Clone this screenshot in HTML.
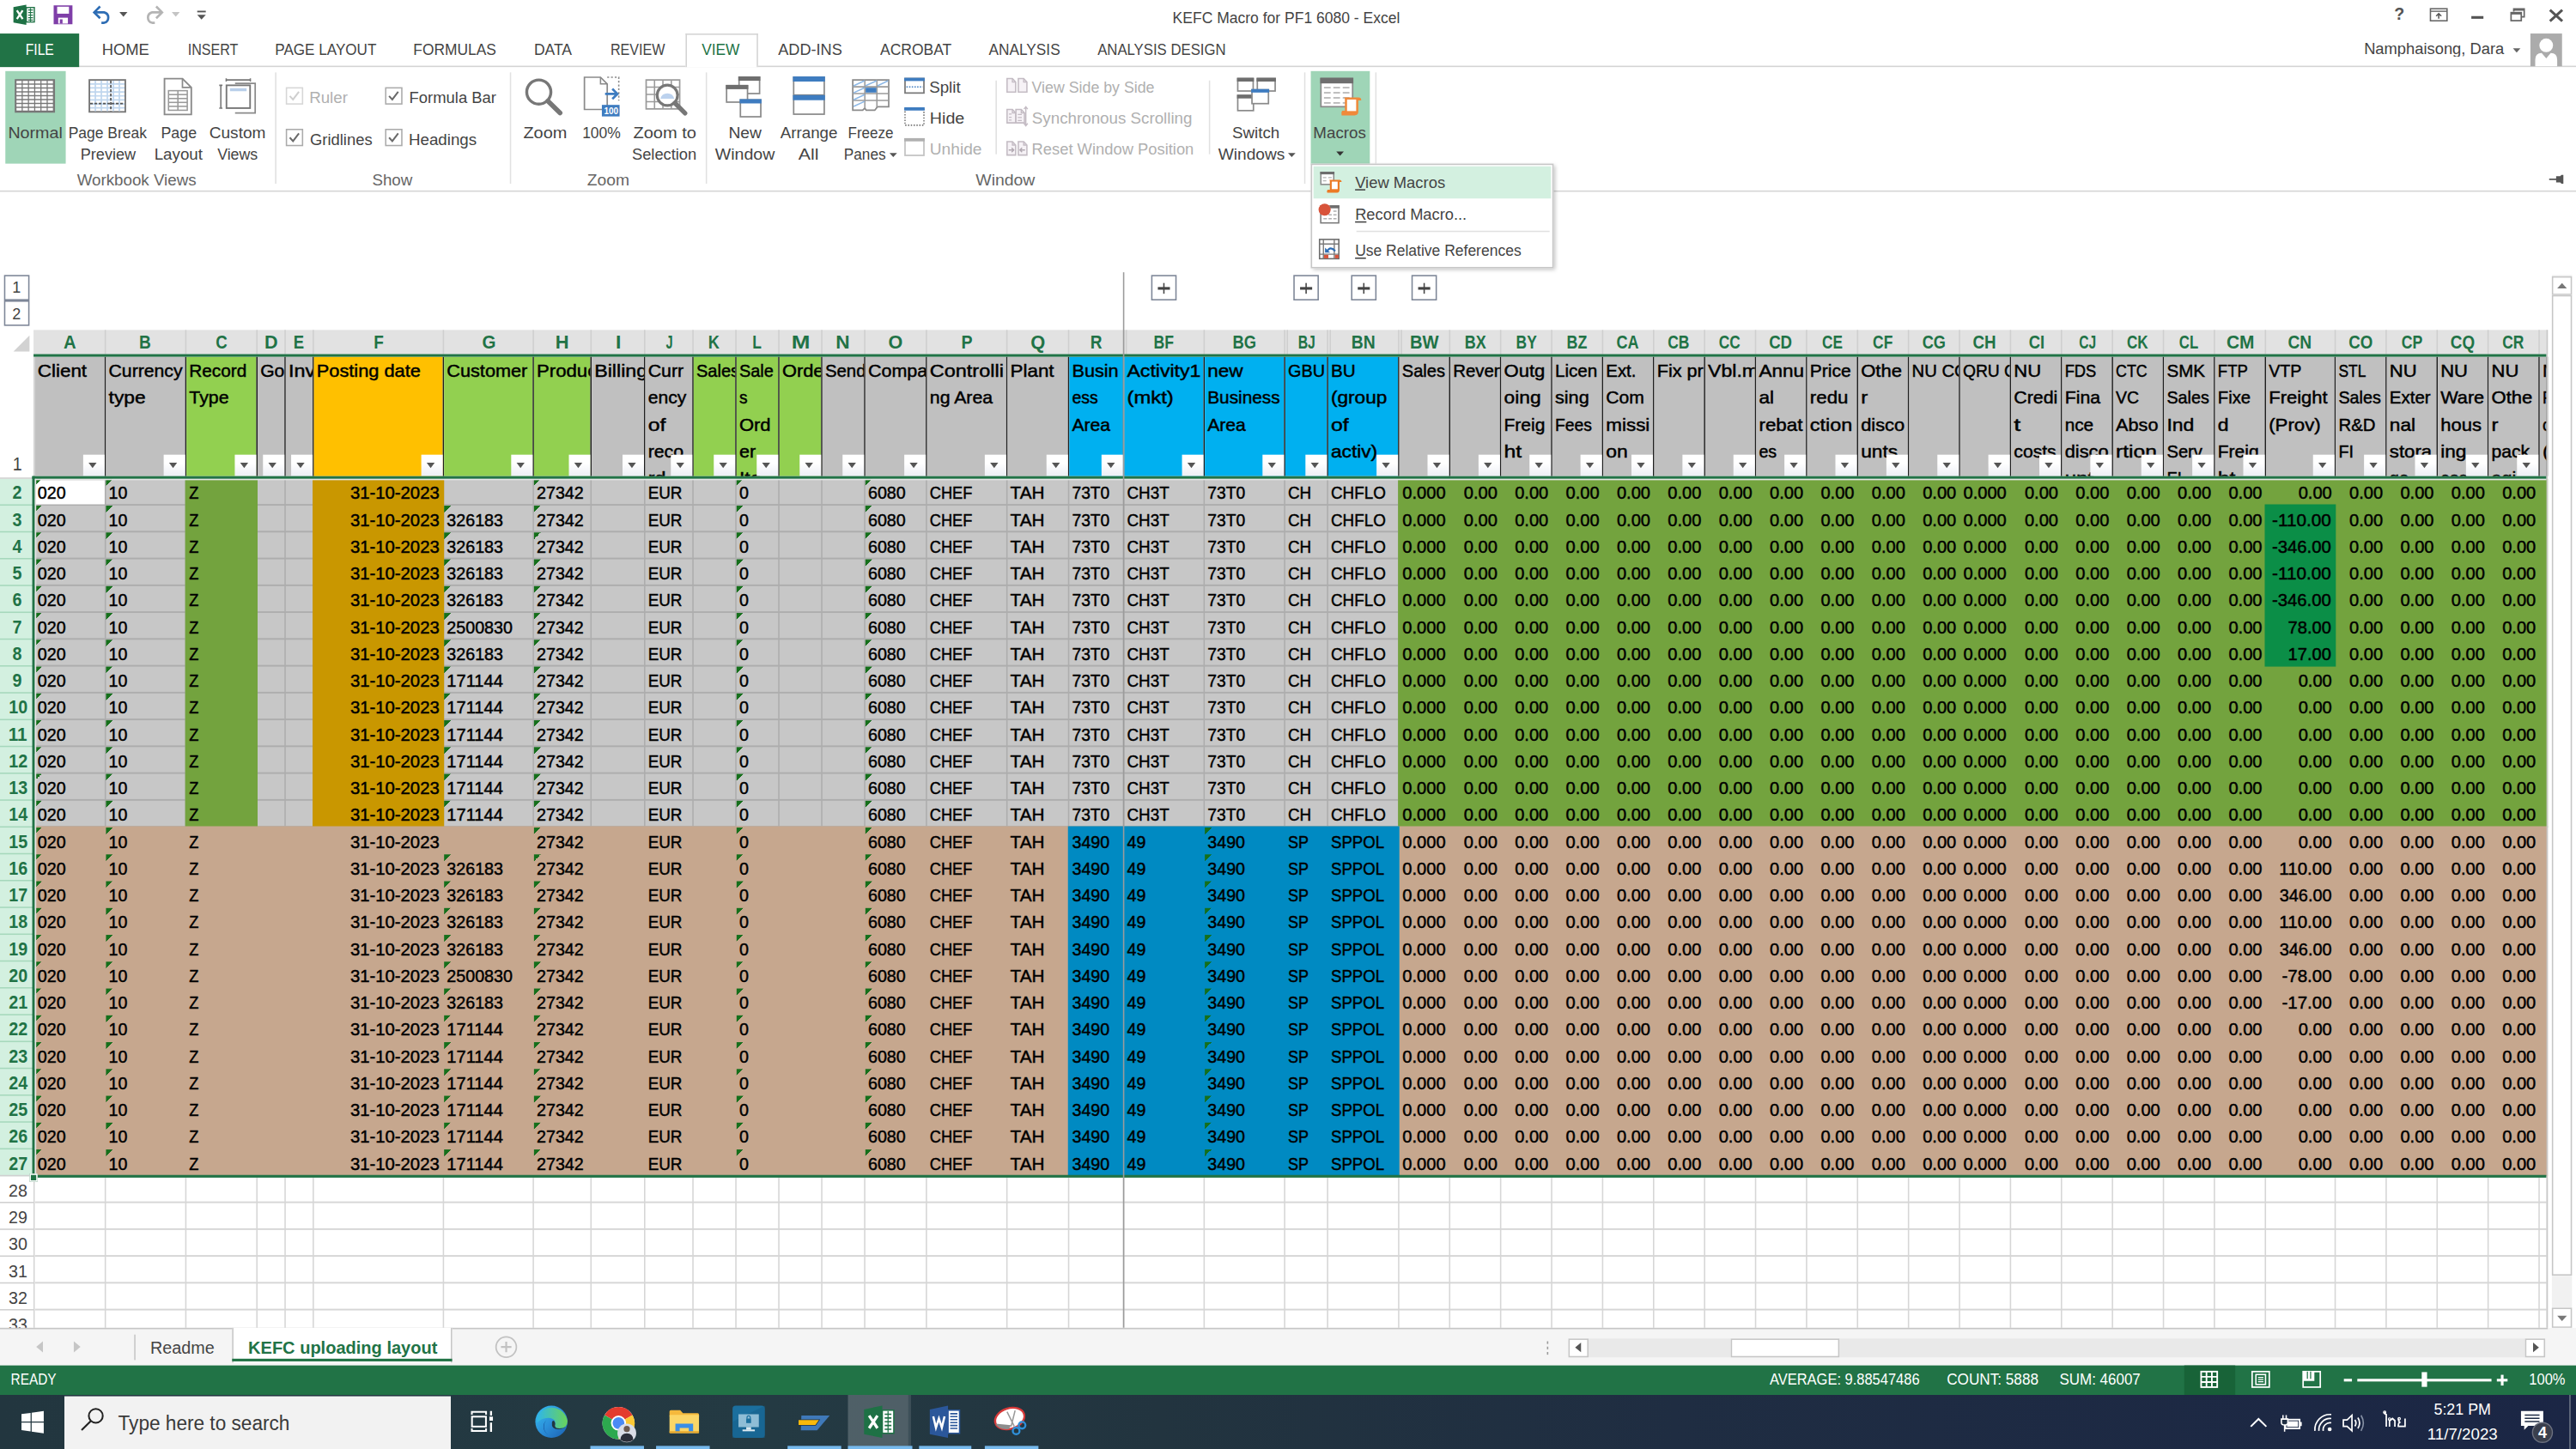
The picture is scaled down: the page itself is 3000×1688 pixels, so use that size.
<!DOCTYPE html>
<html><head><meta charset="utf-8"><title>KEFC Macro for PF1 6080 - Excel</title>
<style>
html,body{margin:0;padding:0}
body{position:relative;width:3000px;height:1688px;overflow:hidden;background:#fff;font-family:"Liberation Sans",sans-serif}
#s{position:absolute;left:0;top:0;width:1920px;height:1080.5px;transform:scale(1.5625);transform-origin:0 0;overflow:hidden;background:#fff;font-family:"Liberation Sans",sans-serif;font-size:11.5px;color:#444}
.t{position:absolute;white-space:nowrap;display:block}
.b{position:absolute;display:block}
svg{overflow:visible}
.h{position:absolute;top:266px;height:89px;overflow:hidden;font-size:13.4px;line-height:20px;color:#000;box-sizing:border-box;padding:0.9px 0 0 2px;-webkit-text-stroke:0.3px #000}
.h span{display:block;white-space:nowrap;transform-origin:0 50%;height:20px}
.f{position:absolute;top:338.5px;width:15.5px;height:16px;background:linear-gradient(#fff 40%,#eceef4);}
.f:after{content:"";position:absolute;left:4.2px;top:6.2px;border:3.7px solid transparent;border-top:4.2px solid #555;border-bottom:0}
.c{position:absolute;top:356.5px;font-size:13.4px;line-height:20px;color:#000;-webkit-text-stroke:0.3px #000}
.c p{margin:0;height:20px;position:relative;white-space:nowrap;padding:1.35px 2.3px 0 1.8px;box-sizing:border-box}
.c span{display:inline-block}
.c.l span{transform-origin:0 50%}
.c.r p{display:flex;justify-content:flex-end}
.c.r span{transform-origin:100% 50%}
.c i{position:absolute;left:0.4px;top:0.7px;width:4.8px;height:4.8px;background:linear-gradient(135deg,#156f1b 50%,transparent 50%)}
.gz{background:#c7c7c7 linear-gradient(180deg,transparent 0,transparent 19px,#adadad 19px,#adadad 20px);background-size:100% 20px}
.gw{background:#fff linear-gradient(180deg,transparent 0,transparent 19px,#d6d6d6 19px,#d6d6d6 20px);background-size:100% 20px}
.k0{transform:scaleX(0.94)}.k1{transform:scaleX(0.87)}.k2{transform:scaleX(0.97)}.k3{transform:scaleX(0.96)}.k4{transform:scaleX(0.90)}.k5{transform:scaleX(0.99)}.k6{transform:scaleX(0.92)}.k7{transform:scaleX(0.86)}.k8{transform:scaleX(0.89)}.k9{transform:scaleX(0.96)}.k10{transform:scaleX(0.99)}.k11{transform:scaleX(0.98)}.k12{transform:scaleX(0.95)}</style></head>
<body><div id="s">
<div class="b" style="left:25px;top:246px;width:1873px;height:18px;background:#e2e2e2;"></div>
<svg class="b" style="left:9px;top:249px;" width="14" height="14" viewBox="0 0 14 14"><path d="M13 1V13H1Z" fill="#d2d2d2"/></svg>
<span class="t" style="left:46.9px;top:246.2px;font-size:14px;line-height:18px;color:#217346;font-weight:bold;transform:scaleX(0.928);transform-origin:50% 50%;">A</span>
<div class="b" style="left:78px;top:246px;width:1px;height:18px;background:#cfcfcf;"></div>
<span class="t" style="left:103.4px;top:246.2px;font-size:14px;line-height:18px;color:#217346;font-weight:bold;transform:scaleX(0.872);transform-origin:50% 50%;">B</span>
<div class="b" style="left:138px;top:246px;width:1px;height:18px;background:#cfcfcf;"></div>
<span class="t" style="left:159.9px;top:246.2px;font-size:14px;line-height:18px;color:#217346;font-weight:bold;transform:scaleX(0.854);transform-origin:50% 50%;">C</span>
<div class="b" style="left:191px;top:246px;width:1px;height:18px;background:#cfcfcf;"></div>
<span class="t" style="left:196.9px;top:246.2px;font-size:14px;line-height:18px;color:#217346;font-weight:bold;transform:scaleX(0.985);transform-origin:50% 50%;">D</span>
<div class="b" style="left:212px;top:246px;width:1px;height:18px;background:#cfcfcf;"></div>
<span class="t" style="left:218.3px;top:246.2px;font-size:14px;line-height:18px;color:#217346;font-weight:bold;transform:scaleX(0.847);transform-origin:50% 50%;">E</span>
<div class="b" style="left:233px;top:246px;width:1px;height:18px;background:#cfcfcf;"></div>
<span class="t" style="left:277.7px;top:246.2px;font-size:14px;line-height:18px;color:#217346;font-weight:bold;transform:scaleX(0.869);transform-origin:50% 50%;">F</span>
<div class="b" style="left:330px;top:246px;width:1px;height:18px;background:#cfcfcf;"></div>
<span class="t" style="left:358.6px;top:246.2px;font-size:14px;line-height:18px;color:#217346;font-weight:bold;transform:scaleX(0.939);transform-origin:50% 50%;">G</span>
<div class="b" style="left:397px;top:246px;width:1px;height:18px;background:#cfcfcf;"></div>
<span class="t" style="left:413.9px;top:246.2px;font-size:14px;line-height:18px;color:#217346;font-weight:bold;">H</span>
<div class="b" style="left:440px;top:246px;width:1px;height:18px;background:#cfcfcf;"></div>
<span class="t" style="left:458.6px;top:246.2px;font-size:14px;line-height:18px;color:#217346;font-weight:bold;transform:scaleX(1.050);transform-origin:50% 50%;">I</span>
<div class="b" style="left:480px;top:246px;width:1px;height:18px;background:#cfcfcf;"></div>
<span class="t" style="left:494.6px;top:246.2px;font-size:14px;line-height:18px;color:#217346;font-weight:bold;transform:scaleX(0.664);transform-origin:50% 50%;">J</span>
<div class="b" style="left:516px;top:246px;width:1px;height:18px;background:#cfcfcf;"></div>
<span class="t" style="left:527.4px;top:246.2px;font-size:14px;line-height:18px;color:#217346;font-weight:bold;transform:scaleX(0.833);transform-origin:50% 50%;">K</span>
<div class="b" style="left:548px;top:246px;width:1px;height:18px;background:#cfcfcf;"></div>
<span class="t" style="left:560.2px;top:246.2px;font-size:14px;line-height:18px;color:#217346;font-weight:bold;transform:scaleX(0.796);transform-origin:50% 50%;">L</span>
<div class="b" style="left:580px;top:246px;width:1px;height:18px;background:#cfcfcf;"></div>
<span class="t" style="left:590.7px;top:246.2px;font-size:14px;line-height:18px;color:#217346;font-weight:bold;transform:scaleX(1.188);transform-origin:50% 50%;">M</span>
<div class="b" style="left:612px;top:246px;width:1px;height:18px;background:#cfcfcf;"></div>
<span class="t" style="left:623.4px;top:246.2px;font-size:14px;line-height:18px;color:#217346;font-weight:bold;transform:scaleX(1.035);transform-origin:50% 50%;">N</span>
<div class="b" style="left:644px;top:246px;width:1px;height:18px;background:#cfcfcf;"></div>
<span class="t" style="left:662.1px;top:246.2px;font-size:14px;line-height:18px;color:#217346;font-weight:bold;transform:scaleX(0.985);transform-origin:50% 50%;">O</span>
<div class="b" style="left:690px;top:246px;width:1px;height:18px;background:#cfcfcf;"></div>
<span class="t" style="left:715.8px;top:246.2px;font-size:14px;line-height:18px;color:#217346;font-weight:bold;transform:scaleX(0.897);transform-origin:50% 50%;">P</span>
<div class="b" style="left:750px;top:246px;width:1px;height:18px;background:#cfcfcf;"></div>
<span class="t" style="left:768.1px;top:246.2px;font-size:14px;line-height:18px;color:#217346;font-weight:bold;">Q</span>
<div class="b" style="left:796px;top:246px;width:1px;height:18px;background:#cfcfcf;"></div>
<span class="t" style="left:811.9px;top:246.2px;font-size:14px;line-height:18px;color:#217346;font-weight:bold;transform:scaleX(0.870);transform-origin:50% 50%;">R</span>
<div class="b" style="left:837px;top:246px;width:1px;height:18px;background:#cfcfcf;"></div>
<span class="t" style="left:858.2px;top:246.2px;font-size:14px;line-height:18px;color:#217346;font-weight:bold;transform:scaleX(0.806);transform-origin:50% 50%;">BF</span>
<div class="b" style="left:897px;top:246px;width:1px;height:18px;background:#cfcfcf;"></div>
<span class="t" style="left:917.0px;top:246.2px;font-size:14px;line-height:18px;color:#217346;font-weight:bold;transform:scaleX(0.839);transform-origin:50% 50%;">BG</span>
<div class="b" style="left:957px;top:246px;width:1px;height:18px;background:#cfcfcf;"></div>
<span class="t" style="left:964.6px;top:246.2px;font-size:14px;line-height:18px;color:#217346;font-weight:bold;transform:scaleX(0.723);transform-origin:50% 50%;">BJ</span>
<div class="b" style="left:989px;top:246px;width:1px;height:18px;background:#cfcfcf;"></div>
<span class="t" style="left:1005.9px;top:246.2px;font-size:14px;line-height:18px;color:#217346;font-weight:bold;transform:scaleX(0.883);transform-origin:50% 50%;">BN</span>
<div class="b" style="left:1042px;top:246px;width:1px;height:18px;background:#cfcfcf;"></div>
<span class="t" style="left:1049.8px;top:246.2px;font-size:14px;line-height:18px;color:#217346;font-weight:bold;transform:scaleX(0.922);transform-origin:50% 50%;">BW</span>
<div class="b" style="left:1080px;top:246px;width:1px;height:18px;background:#cfcfcf;"></div>
<span class="t" style="left:1089.8px;top:246.2px;font-size:14px;line-height:18px;color:#217346;font-weight:bold;transform:scaleX(0.820);transform-origin:50% 50%;">BX</span>
<div class="b" style="left:1118px;top:246px;width:1px;height:18px;background:#cfcfcf;"></div>
<span class="t" style="left:1127.8px;top:246.2px;font-size:14px;line-height:18px;color:#217346;font-weight:bold;transform:scaleX(0.795);transform-origin:50% 50%;">BY</span>
<div class="b" style="left:1156px;top:246px;width:1px;height:18px;background:#cfcfcf;"></div>
<span class="t" style="left:1166.2px;top:246.2px;font-size:14px;line-height:18px;color:#217346;font-weight:bold;transform:scaleX(0.813);transform-origin:50% 50%;">BZ</span>
<div class="b" style="left:1194px;top:246px;width:1px;height:18px;background:#cfcfcf;"></div>
<span class="t" style="left:1203.4px;top:246.2px;font-size:14px;line-height:18px;color:#217346;font-weight:bold;transform:scaleX(0.825);transform-origin:50% 50%;">CA</span>
<div class="b" style="left:1232px;top:246px;width:1px;height:18px;background:#cfcfcf;"></div>
<span class="t" style="left:1241.4px;top:246.2px;font-size:14px;line-height:18px;color:#217346;font-weight:bold;transform:scaleX(0.799);transform-origin:50% 50%;">CB</span>
<div class="b" style="left:1270px;top:246px;width:1px;height:18px;background:#cfcfcf;"></div>
<span class="t" style="left:1279.4px;top:246.2px;font-size:14px;line-height:18px;color:#217346;font-weight:bold;transform:scaleX(0.791);transform-origin:50% 50%;">CC</span>
<div class="b" style="left:1308px;top:246px;width:1px;height:18px;background:#cfcfcf;"></div>
<span class="t" style="left:1317.4px;top:246.2px;font-size:14px;line-height:18px;color:#217346;font-weight:bold;transform:scaleX(0.852);transform-origin:50% 50%;">CD</span>
<div class="b" style="left:1346px;top:246px;width:1px;height:18px;background:#cfcfcf;"></div>
<span class="t" style="left:1355.8px;top:246.2px;font-size:14px;line-height:18px;color:#217346;font-weight:bold;transform:scaleX(0.787);transform-origin:50% 50%;">CE</span>
<div class="b" style="left:1384px;top:246px;width:1px;height:18px;background:#cfcfcf;"></div>
<span class="t" style="left:1394.2px;top:246.2px;font-size:14px;line-height:18px;color:#217346;font-weight:bold;transform:scaleX(0.797);transform-origin:50% 50%;">CF</span>
<div class="b" style="left:1422px;top:246px;width:1px;height:18px;background:#cfcfcf;"></div>
<span class="t" style="left:1431.0px;top:246.2px;font-size:14px;line-height:18px;color:#217346;font-weight:bold;transform:scaleX(0.831);transform-origin:50% 50%;">CG</span>
<div class="b" style="left:1460px;top:246px;width:1px;height:18px;background:#cfcfcf;"></div>
<span class="t" style="left:1469.4px;top:246.2px;font-size:14px;line-height:18px;color:#217346;font-weight:bold;transform:scaleX(0.858);transform-origin:50% 50%;">CH</span>
<div class="b" style="left:1498px;top:246px;width:1px;height:18px;background:#cfcfcf;"></div>
<span class="t" style="left:1510.5px;top:246.2px;font-size:14px;line-height:18px;color:#217346;font-weight:bold;transform:scaleX(0.841);transform-origin:50% 50%;">CI</span>
<div class="b" style="left:1536px;top:246px;width:1px;height:18px;background:#cfcfcf;"></div>
<span class="t" style="left:1546.6px;top:246.2px;font-size:14px;line-height:18px;color:#217346;font-weight:bold;transform:scaleX(0.714);transform-origin:50% 50%;">CJ</span>
<div class="b" style="left:1574px;top:246px;width:1px;height:18px;background:#cfcfcf;"></div>
<span class="t" style="left:1583.4px;top:246.2px;font-size:14px;line-height:18px;color:#217346;font-weight:bold;transform:scaleX(0.781);transform-origin:50% 50%;">CK</span>
<div class="b" style="left:1612px;top:246px;width:1px;height:18px;background:#cfcfcf;"></div>
<span class="t" style="left:1622.2px;top:246.2px;font-size:14px;line-height:18px;color:#217346;font-weight:bold;transform:scaleX(0.766);transform-origin:50% 50%;">CL</span>
<div class="b" style="left:1650px;top:246px;width:1px;height:18px;background:#cfcfcf;"></div>
<span class="t" style="left:1658.6px;top:246.2px;font-size:14px;line-height:18px;color:#217346;font-weight:bold;transform:scaleX(0.956);transform-origin:50% 50%;">CM</span>
<div class="b" style="left:1688px;top:246px;width:1px;height:18px;background:#cfcfcf;"></div>
<span class="t" style="left:1704.4px;top:246.2px;font-size:14px;line-height:18px;color:#217346;font-weight:bold;transform:scaleX(0.875);transform-origin:50% 50%;">CN</span>
<div class="b" style="left:1740px;top:246px;width:1px;height:18px;background:#cfcfcf;"></div>
<span class="t" style="left:1749.0px;top:246.2px;font-size:14px;line-height:18px;color:#217346;font-weight:bold;transform:scaleX(0.854);transform-origin:50% 50%;">CO</span>
<div class="b" style="left:1778px;top:246px;width:1px;height:18px;background:#cfcfcf;"></div>
<span class="t" style="left:1787.8px;top:246.2px;font-size:14px;line-height:18px;color:#217346;font-weight:bold;transform:scaleX(0.810);transform-origin:50% 50%;">CP</span>
<div class="b" style="left:1816px;top:246px;width:1px;height:18px;background:#cfcfcf;"></div>
<span class="t" style="left:1825.0px;top:246.2px;font-size:14px;line-height:18px;color:#217346;font-weight:bold;transform:scaleX(0.861);transform-origin:50% 50%;">CQ</span>
<div class="b" style="left:1854px;top:246px;width:1px;height:18px;background:#cfcfcf;"></div>
<span class="t" style="left:1863.4px;top:246.2px;font-size:14px;line-height:18px;color:#217346;font-weight:bold;transform:scaleX(0.798);transform-origin:50% 50%;">CR</span>
<div class="b" style="left:1892px;top:246px;width:1px;height:18px;background:#cfcfcf;"></div>
<div class="b" style="left:1898px;top:246px;width:1px;height:18px;background:#cfcfcf;"></div>
<div class="b" style="left:839px;top:246px;width:1px;height:18px;background:#cfcfcf;"></div>
<div class="b" style="left:959px;top:246px;width:1px;height:18px;background:#cfcfcf;"></div>
<div class="b" style="left:991px;top:246px;width:1px;height:18px;background:#cfcfcf;"></div>
<div class="b" style="left:1044px;top:246px;width:1px;height:18px;background:#cfcfcf;"></div>
<div class="b" style="left:0px;top:357px;width:24px;height:520px;background:#d3f0e0;"></div>
<span class="t" style="left:8.5px;top:358.6px;font-size:13.7px;line-height:18px;color:#217346;font-weight:bold;transform:scaleX(0.919);transform-origin:50% 50%;">2</span>
<div class="b" style="left:0px;top:376px;width:25px;height:1px;background:#a6d8bc;"></div>
<span class="t" style="left:8.5px;top:378.6px;font-size:13.7px;line-height:18px;color:#217346;font-weight:bold;transform:scaleX(0.919);transform-origin:50% 50%;">3</span>
<div class="b" style="left:0px;top:396px;width:25px;height:1px;background:#a6d8bc;"></div>
<span class="t" style="left:8.5px;top:398.6px;font-size:13.7px;line-height:18px;color:#217346;font-weight:bold;transform:scaleX(0.919);transform-origin:50% 50%;">4</span>
<div class="b" style="left:0px;top:416px;width:25px;height:1px;background:#a6d8bc;"></div>
<span class="t" style="left:8.5px;top:418.6px;font-size:13.7px;line-height:18px;color:#217346;font-weight:bold;transform:scaleX(0.919);transform-origin:50% 50%;">5</span>
<div class="b" style="left:0px;top:436px;width:25px;height:1px;background:#a6d8bc;"></div>
<span class="t" style="left:8.5px;top:438.6px;font-size:13.7px;line-height:18px;color:#217346;font-weight:bold;transform:scaleX(0.919);transform-origin:50% 50%;">6</span>
<div class="b" style="left:0px;top:456px;width:25px;height:1px;background:#a6d8bc;"></div>
<span class="t" style="left:8.5px;top:458.6px;font-size:13.7px;line-height:18px;color:#217346;font-weight:bold;transform:scaleX(0.919);transform-origin:50% 50%;">7</span>
<div class="b" style="left:0px;top:476px;width:25px;height:1px;background:#a6d8bc;"></div>
<span class="t" style="left:8.5px;top:478.6px;font-size:13.7px;line-height:18px;color:#217346;font-weight:bold;transform:scaleX(0.919);transform-origin:50% 50%;">8</span>
<div class="b" style="left:0px;top:496px;width:25px;height:1px;background:#a6d8bc;"></div>
<span class="t" style="left:8.5px;top:498.6px;font-size:13.7px;line-height:18px;color:#217346;font-weight:bold;transform:scaleX(0.919);transform-origin:50% 50%;">9</span>
<div class="b" style="left:0px;top:516px;width:25px;height:1px;background:#a6d8bc;"></div>
<span class="t" style="left:5.6px;top:518.6px;font-size:13.7px;line-height:18px;color:#217346;font-weight:bold;transform:scaleX(0.919);transform-origin:50% 50%;">10</span>
<div class="b" style="left:0px;top:536px;width:25px;height:1px;background:#a6d8bc;"></div>
<span class="t" style="left:6.0px;top:538.6px;font-size:13.7px;line-height:18px;color:#217346;font-weight:bold;transform:scaleX(0.967);transform-origin:50% 50%;">11</span>
<div class="b" style="left:0px;top:556px;width:25px;height:1px;background:#a6d8bc;"></div>
<span class="t" style="left:5.6px;top:558.6px;font-size:13.7px;line-height:18px;color:#217346;font-weight:bold;transform:scaleX(0.919);transform-origin:50% 50%;">12</span>
<div class="b" style="left:0px;top:576px;width:25px;height:1px;background:#a6d8bc;"></div>
<span class="t" style="left:5.6px;top:578.6px;font-size:13.7px;line-height:18px;color:#217346;font-weight:bold;transform:scaleX(0.919);transform-origin:50% 50%;">13</span>
<div class="b" style="left:0px;top:596px;width:25px;height:1px;background:#a6d8bc;"></div>
<span class="t" style="left:5.6px;top:598.6px;font-size:13.7px;line-height:18px;color:#217346;font-weight:bold;transform:scaleX(0.919);transform-origin:50% 50%;">14</span>
<div class="b" style="left:0px;top:616px;width:25px;height:1px;background:#a6d8bc;"></div>
<span class="t" style="left:5.6px;top:618.6px;font-size:13.7px;line-height:18px;color:#217346;font-weight:bold;transform:scaleX(0.919);transform-origin:50% 50%;">15</span>
<div class="b" style="left:0px;top:636px;width:25px;height:1px;background:#a6d8bc;"></div>
<span class="t" style="left:5.6px;top:638.6px;font-size:13.7px;line-height:18px;color:#217346;font-weight:bold;transform:scaleX(0.919);transform-origin:50% 50%;">16</span>
<div class="b" style="left:0px;top:656px;width:25px;height:1px;background:#a6d8bc;"></div>
<span class="t" style="left:5.6px;top:658.6px;font-size:13.7px;line-height:18px;color:#217346;font-weight:bold;transform:scaleX(0.919);transform-origin:50% 50%;">17</span>
<div class="b" style="left:0px;top:676px;width:25px;height:1px;background:#a6d8bc;"></div>
<span class="t" style="left:5.6px;top:678.6px;font-size:13.7px;line-height:18px;color:#217346;font-weight:bold;transform:scaleX(0.919);transform-origin:50% 50%;">18</span>
<div class="b" style="left:0px;top:696px;width:25px;height:1px;background:#a6d8bc;"></div>
<span class="t" style="left:5.6px;top:698.6px;font-size:13.7px;line-height:18px;color:#217346;font-weight:bold;transform:scaleX(0.919);transform-origin:50% 50%;">19</span>
<div class="b" style="left:0px;top:716px;width:25px;height:1px;background:#a6d8bc;"></div>
<span class="t" style="left:5.6px;top:718.6px;font-size:13.7px;line-height:18px;color:#217346;font-weight:bold;transform:scaleX(0.919);transform-origin:50% 50%;">20</span>
<div class="b" style="left:0px;top:736px;width:25px;height:1px;background:#a6d8bc;"></div>
<span class="t" style="left:5.6px;top:738.6px;font-size:13.7px;line-height:18px;color:#217346;font-weight:bold;transform:scaleX(0.919);transform-origin:50% 50%;">21</span>
<div class="b" style="left:0px;top:756px;width:25px;height:1px;background:#a6d8bc;"></div>
<span class="t" style="left:5.6px;top:758.6px;font-size:13.7px;line-height:18px;color:#217346;font-weight:bold;transform:scaleX(0.919);transform-origin:50% 50%;">22</span>
<div class="b" style="left:0px;top:776px;width:25px;height:1px;background:#a6d8bc;"></div>
<span class="t" style="left:5.6px;top:778.6px;font-size:13.7px;line-height:18px;color:#217346;font-weight:bold;transform:scaleX(0.919);transform-origin:50% 50%;">23</span>
<div class="b" style="left:0px;top:796px;width:25px;height:1px;background:#a6d8bc;"></div>
<span class="t" style="left:5.6px;top:798.6px;font-size:13.7px;line-height:18px;color:#217346;font-weight:bold;transform:scaleX(0.919);transform-origin:50% 50%;">24</span>
<div class="b" style="left:0px;top:816px;width:25px;height:1px;background:#a6d8bc;"></div>
<span class="t" style="left:5.6px;top:818.6px;font-size:13.7px;line-height:18px;color:#217346;font-weight:bold;transform:scaleX(0.919);transform-origin:50% 50%;">25</span>
<div class="b" style="left:0px;top:836px;width:25px;height:1px;background:#a6d8bc;"></div>
<span class="t" style="left:5.6px;top:838.6px;font-size:13.7px;line-height:18px;color:#217346;font-weight:bold;transform:scaleX(0.919);transform-origin:50% 50%;">26</span>
<div class="b" style="left:0px;top:856px;width:25px;height:1px;background:#a6d8bc;"></div>
<span class="t" style="left:5.6px;top:858.6px;font-size:13.7px;line-height:18px;color:#217346;font-weight:bold;transform:scaleX(0.919);transform-origin:50% 50%;">27</span>
<div class="b" style="left:0px;top:876px;width:25px;height:1px;background:#d0d0d0;"></div>
<span class="t" style="left:5.7px;top:879.1px;font-size:13.4px;line-height:17px;color:#444;transform:scaleX(0.939);transform-origin:50% 50%;">28</span>
<div class="b" style="left:0px;top:896px;width:25px;height:1px;background:#d0d0d0;"></div>
<span class="t" style="left:5.7px;top:899.1px;font-size:13.4px;line-height:17px;color:#444;transform:scaleX(0.939);transform-origin:50% 50%;">29</span>
<div class="b" style="left:0px;top:916px;width:25px;height:1px;background:#d0d0d0;"></div>
<span class="t" style="left:5.7px;top:919.1px;font-size:13.4px;line-height:17px;color:#444;transform:scaleX(0.939);transform-origin:50% 50%;">30</span>
<div class="b" style="left:0px;top:936px;width:25px;height:1px;background:#d0d0d0;"></div>
<span class="t" style="left:5.7px;top:939.1px;font-size:13.4px;line-height:17px;color:#444;transform:scaleX(0.939);transform-origin:50% 50%;">31</span>
<div class="b" style="left:0px;top:956px;width:25px;height:1px;background:#d0d0d0;"></div>
<span class="t" style="left:5.7px;top:959.1px;font-size:13.4px;line-height:17px;color:#444;transform:scaleX(0.939);transform-origin:50% 50%;">32</span>
<div class="b" style="left:0px;top:976px;width:25px;height:1px;background:#d0d0d0;"></div>
<span class="t" style="left:5.7px;top:979.1px;font-size:13.4px;line-height:17px;color:#444;transform:scaleX(0.939);transform-origin:50% 50%;">33</span>
<div class="b" style="left:0px;top:996px;width:25px;height:1px;background:#d0d0d0;"></div>
<span class="t" style="left:8.9px;top:337.2px;font-size:14px;line-height:18px;color:#444;transform:scaleX(0.899);transform-origin:50% 50%;">1</span>
<div class="b" style="left:0px;top:356px;width:25px;height:1px;background:#d0d0d0;"></div>
<div class="b" style="left:25px;top:266px;width:1px;height:90px;background:#d0d0d0;"></div>
<div class="b" style="left:25px;top:878px;width:1px;height:112px;background:#d0d0d0;"></div>
<div class="h" style="left:26px;width:52px;background:#c0c0c0">
<span style="transform:scaleX(1.072)">Client</span>
</div>
<div class="b" style="left:78px;top:266px;width:1px;height:89px;background:#1f1f1f;"></div>
<i class="f" style="left:62px"></i>
<div class="h" style="left:79px;width:59px;background:#c0c0c0">
<span style="transform:scaleX(1.013)">Currency</span>
<span style="transform:scaleX(1.087)">type</span>
</div>
<div class="b" style="left:138px;top:266px;width:1px;height:89px;background:#1f1f1f;"></div>
<i class="f" style="left:122px"></i>
<div class="h" style="left:139px;width:52px;background:#92d050">
<span style="transform:scaleX(0.992)">Record</span>
<span style="transform:scaleX(1.018)">Type</span>
</div>
<div class="b" style="left:191px;top:266px;width:1px;height:89px;background:#1f1f1f;"></div>
<i class="f" style="left:175px"></i>
<div class="h" style="left:192px;width:20px;background:#c0c0c0">
<span style="transform:scaleX(1.008)">Goods</span>
</div>
<div class="b" style="left:212px;top:266px;width:1px;height:89px;background:#1f1f1f;"></div>
<i class="f" style="left:196px"></i>
<div class="h" style="left:213px;width:20px;background:#c0c0c0">
<span style="transform:scaleX(1.117)">Invoi</span>
</div>
<div class="b" style="left:233px;top:266px;width:1px;height:89px;background:#1f1f1f;"></div>
<i class="f" style="left:217px"></i>
<div class="h" style="left:234px;width:96px;background:#ffc000">
<span style="transform:scaleX(1.041)">Posting date</span>
</div>
<div class="b" style="left:330px;top:266px;width:1px;height:89px;background:#1f1f1f;"></div>
<i class="f" style="left:314px"></i>
<div class="h" style="left:331px;width:66px;background:#92d050">
<span style="transform:scaleX(1.036)">Customer</span>
</div>
<div class="b" style="left:397px;top:266px;width:1px;height:89px;background:#1f1f1f;"></div>
<i class="f" style="left:381px"></i>
<div class="h" style="left:398px;width:42px;background:#92d050">
<span style="transform:scaleX(1.060)">Product</span>
</div>
<div class="b" style="left:440px;top:266px;width:1px;height:89px;background:#1f1f1f;"></div>
<i class="f" style="left:424px"></i>
<div class="h" style="left:441px;width:39px;background:#c0c0c0">
<span style="transform:scaleX(1.110)">Billing t</span>
</div>
<div class="b" style="left:480px;top:266px;width:1px;height:89px;background:#1f1f1f;"></div>
<i class="f" style="left:464px"></i>
<div class="h" style="left:481px;width:35px;background:#c0c0c0">
<span style="transform:scaleX(1.018)">Curr</span>
<span style="transform:scaleX(1.009)">ency</span>
<span style="transform:scaleX(1.187)">of</span>
<span style="transform:scaleX(1.017)">reco</span>
<span style="transform:scaleX(1.113)">rd</span>
</div>
<div class="b" style="left:516px;top:266px;width:1px;height:89px;background:#1f1f1f;"></div>
<i class="f" style="left:500px"></i>
<div class="h" style="left:517px;width:31px;background:#92d050">
<span style="transform:scaleX(0.958)">Sales d</span>
</div>
<div class="b" style="left:548px;top:266px;width:1px;height:89px;background:#1f1f1f;"></div>
<i class="f" style="left:532px"></i>
<div class="h" style="left:549px;width:31px;background:#92d050">
<span style="transform:scaleX(0.951)">Sale</span>
<span style="transform:scaleX(0.913)">s</span>
<span style="transform:scaleX(1.050)">Ord</span>
<span style="transform:scaleX(1.027)">er</span>
<span style="transform:scaleX(1.095)">Ite</span>
</div>
<div class="b" style="left:580px;top:266px;width:1px;height:89px;background:#1f1f1f;"></div>
<i class="f" style="left:564px"></i>
<div class="h" style="left:581px;width:31px;background:#92d050">
<span style="transform:scaleX(1.042)">Order</span>
</div>
<div class="b" style="left:612px;top:266px;width:1px;height:89px;background:#1f1f1f;"></div>
<i class="f" style="left:596px"></i>
<div class="h" style="left:613px;width:31px;background:#c0c0c0">
<span style="transform:scaleX(0.974)">Sende</span>
</div>
<div class="b" style="left:644px;top:266px;width:1px;height:89px;background:#1f1f1f;"></div>
<i class="f" style="left:628px"></i>
<div class="h" style="left:645px;width:45px;background:#c0c0c0">
<span style="transform:scaleX(1.027)">Compan</span>
</div>
<div class="b" style="left:690px;top:266px;width:1px;height:89px;background:#1f1f1f;"></div>
<i class="f" style="left:674px"></i>
<div class="h" style="left:691px;width:59px;background:#c0c0c0">
<span style="transform:scaleX(1.121)">Controlli</span>
<span style="transform:scaleX(1.016)">ng Area</span>
</div>
<div class="b" style="left:750px;top:266px;width:1px;height:89px;background:#1f1f1f;"></div>
<i class="f" style="left:734px"></i>
<div class="h" style="left:751px;width:45px;background:#c0c0c0">
<span style="transform:scaleX(1.069)">Plant</span>
</div>
<div class="b" style="left:796px;top:266px;width:1px;height:89px;background:#1f1f1f;"></div>
<i class="f" style="left:780px"></i>
<div class="h" style="left:797px;width:40px;background:#00b0f0">
<span style="transform:scaleX(1.035)">Busin</span>
<span style="transform:scaleX(0.929)">ess</span>
<span style="transform:scaleX(1.009)">Area</span>
</div>
<div class="b" style="left:837px;top:266px;width:1px;height:89px;background:#1f1f1f;"></div>
<i class="f" style="left:821px"></i>
<div class="h" style="left:838px;width:59px;background:#00b0f0">
<span style="transform:scaleX(1.101)">Activity1</span>
<span style="transform:scaleX(1.137)">(mkt)</span>
</div>
<div class="b" style="left:897px;top:266px;width:1px;height:89px;background:#1f1f1f;"></div>
<i class="f" style="left:881px"></i>
<div class="h" style="left:898px;width:59px;background:#00b0f0">
<span style="transform:scaleX(1.079)">new</span>
<span style="transform:scaleX(0.994)">Business</span>
<span style="transform:scaleX(1.009)">Area</span>
</div>
<div class="b" style="left:957px;top:266px;width:1px;height:89px;background:#1f1f1f;"></div>
<i class="f" style="left:941px"></i>
<div class="h" style="left:958px;width:31px;background:#00b0f0">
<span style="transform:scaleX(0.948)">GBU</span>
</div>
<div class="b" style="left:989px;top:266px;width:1px;height:89px;background:#1f1f1f;"></div>
<i class="f" style="left:973px"></i>
<div class="h" style="left:990px;width:52px;background:#00b0f0">
<span style="transform:scaleX(0.986)">BU</span>
<span style="transform:scaleX(1.080)">(group</span>
<span style="transform:scaleX(1.187)">of</span>
<span style="transform:scaleX(1.083)">activ)</span>
</div>
<div class="b" style="left:1042px;top:266px;width:1px;height:89px;background:#1f1f1f;"></div>
<i class="f" style="left:1026px"></i>
<div class="h" style="left:1043px;width:37px;background:#c0c0c0">
<span style="transform:scaleX(0.958)">Sales q</span>
</div>
<div class="b" style="left:1080px;top:266px;width:1px;height:89px;background:#1f1f1f;"></div>
<i class="f" style="left:1064px"></i>
<div class="h" style="left:1081px;width:37px;background:#c0c0c0">
<span style="transform:scaleX(0.974)">Reven</span>
</div>
<div class="b" style="left:1118px;top:266px;width:1px;height:89px;background:#1f1f1f;"></div>
<i class="f" style="left:1102px"></i>
<div class="h" style="left:1119px;width:37px;background:#c0c0c0">
<span style="transform:scaleX(1.053)">Outg</span>
<span style="transform:scaleX(1.087)">oing</span>
<span style="transform:scaleX(1.002)">Freig</span>
<span style="transform:scaleX(1.187)">ht</span>
</div>
<div class="b" style="left:1156px;top:266px;width:1px;height:89px;background:#1f1f1f;"></div>
<i class="f" style="left:1140px"></i>
<div class="h" style="left:1157px;width:37px;background:#c0c0c0">
<span style="transform:scaleX(0.987)">Licen</span>
<span style="transform:scaleX(1.037)">sing</span>
<span style="transform:scaleX(0.924)">Fees</span>
</div>
<div class="b" style="left:1194px;top:266px;width:1px;height:89px;background:#1f1f1f;"></div>
<i class="f" style="left:1178px"></i>
<div class="h" style="left:1195px;width:37px;background:#c0c0c0">
<span style="transform:scaleX(0.972)">Ext.</span>
<span style="transform:scaleX(1.009)">Com</span>
<span style="transform:scaleX(1.070)">missi</span>
<span style="transform:scaleX(1.095)">on</span>
</div>
<div class="b" style="left:1232px;top:266px;width:1px;height:89px;background:#1f1f1f;"></div>
<i class="f" style="left:1216px"></i>
<div class="h" style="left:1233px;width:37px;background:#c0c0c0">
<span style="transform:scaleX(1.035)">Fix pri</span>
</div>
<div class="b" style="left:1270px;top:266px;width:1px;height:89px;background:#1f1f1f;"></div>
<i class="f" style="left:1254px"></i>
<div class="h" style="left:1271px;width:37px;background:#c0c0c0">
<span style="transform:scaleX(1.102)">Vbl.m</span>
</div>
<div class="b" style="left:1308px;top:266px;width:1px;height:89px;background:#1f1f1f;"></div>
<i class="f" style="left:1292px"></i>
<div class="h" style="left:1309px;width:37px;background:#c0c0c0">
<span style="transform:scaleX(1.076)">Annu</span>
<span style="transform:scaleX(1.076)">al</span>
<span style="transform:scaleX(1.069)">rebat</span>
<span style="transform:scaleX(0.937)">es</span>
</div>
<div class="b" style="left:1346px;top:266px;width:1px;height:89px;background:#1f1f1f;"></div>
<i class="f" style="left:1330px"></i>
<div class="h" style="left:1347px;width:37px;background:#c0c0c0">
<span style="transform:scaleX(1.002)">Price</span>
<span style="transform:scaleX(1.065)">redu</span>
<span style="transform:scaleX(1.117)">ction</span>
</div>
<div class="b" style="left:1384px;top:266px;width:1px;height:89px;background:#1f1f1f;"></div>
<i class="f" style="left:1368px"></i>
<div class="h" style="left:1385px;width:37px;background:#c0c0c0">
<span style="transform:scaleX(1.053)">Othe</span>
<span style="transform:scaleX(1.143)">r</span>
<span style="transform:scaleX(1.043)">disco</span>
<span style="transform:scaleX(1.087)">unts</span>
</div>
<div class="b" style="left:1422px;top:266px;width:1px;height:89px;background:#1f1f1f;"></div>
<i class="f" style="left:1406px"></i>
<div class="h" style="left:1423px;width:37px;background:#c0c0c0">
<span style="transform:scaleX(0.969)">NU CO</span>
</div>
<div class="b" style="left:1460px;top:266px;width:1px;height:89px;background:#1f1f1f;"></div>
<i class="f" style="left:1444px"></i>
<div class="h" style="left:1461px;width:37px;background:#c0c0c0">
<span style="transform:scaleX(0.921)">QRU C</span>
</div>
<div class="b" style="left:1498px;top:266px;width:1px;height:89px;background:#1f1f1f;"></div>
<i class="f" style="left:1482px"></i>
<div class="h" style="left:1499px;width:37px;background:#c0c0c0">
<span style="transform:scaleX(1.054)">NU</span>
<span style="transform:scaleX(1.019)">Credi</span>
<span style="transform:scaleX(1.370)">t</span>
<span style="transform:scaleX(1.011)">costs</span>
</div>
<div class="b" style="left:1536px;top:266px;width:1px;height:89px;background:#1f1f1f;"></div>
<i class="f" style="left:1520px"></i>
<div class="h" style="left:1537px;width:37px;background:#c0c0c0">
<span style="transform:scaleX(0.875)">FDS</span>
<span style="transform:scaleX(1.017)">Fina</span>
<span style="transform:scaleX(0.991)">nce</span>
<span style="transform:scaleX(1.043)">disco</span>
<span style="transform:scaleX(1.150)">unt</span>
</div>
<div class="b" style="left:1574px;top:266px;width:1px;height:89px;background:#1f1f1f;"></div>
<i class="f" style="left:1558px"></i>
<div class="h" style="left:1575px;width:37px;background:#c0c0c0">
<span style="transform:scaleX(0.852)">CTC</span>
<span style="transform:scaleX(0.932)">VC</span>
<span style="transform:scaleX(1.035)">Abso</span>
<span style="transform:scaleX(1.174)">rtion</span>
</div>
<div class="b" style="left:1612px;top:266px;width:1px;height:89px;background:#1f1f1f;"></div>
<i class="f" style="left:1596px"></i>
<div class="h" style="left:1613px;width:37px;background:#c0c0c0">
<span style="transform:scaleX(0.984)">SMK</span>
<span style="transform:scaleX(0.943)">Sales</span>
<span style="transform:scaleX(1.095)">Ind</span>
<span style="transform:scaleX(0.963)">Serv</span>
<span style="transform:scaleX(0.942)">FI</span>
</div>
<div class="b" style="left:1650px;top:266px;width:1px;height:89px;background:#1f1f1f;"></div>
<i class="f" style="left:1634px"></i>
<div class="h" style="left:1651px;width:37px;background:#c0c0c0">
<span style="transform:scaleX(0.887)">FTP</span>
<span style="transform:scaleX(0.967)">Fixe</span>
<span style="transform:scaleX(1.095)">d</span>
<span style="transform:scaleX(1.002)">Freig</span>
<span style="transform:scaleX(1.187)">ht</span>
</div>
<div class="b" style="left:1688px;top:266px;width:1px;height:89px;background:#1f1f1f;"></div>
<i class="f" style="left:1672px"></i>
<div class="h" style="left:1689px;width:51px;background:#c0c0c0">
<span style="transform:scaleX(0.939)">VTP</span>
<span style="transform:scaleX(1.052)">Freight</span>
<span style="transform:scaleX(1.063)">(Prov)</span>
</div>
<div class="b" style="left:1740px;top:266px;width:1px;height:89px;background:#1f1f1f;"></div>
<i class="f" style="left:1724px"></i>
<div class="h" style="left:1741px;width:37px;background:#c0c0c0">
<span style="transform:scaleX(0.830)">STL</span>
<span style="transform:scaleX(0.943)">Sales</span>
<span style="transform:scaleX(0.973)">R&amp;D</span>
<span style="transform:scaleX(0.942)">FI</span>
</div>
<div class="b" style="left:1778px;top:266px;width:1px;height:89px;background:#1f1f1f;"></div>
<i class="f" style="left:1762px"></i>
<div class="h" style="left:1779px;width:37px;background:#c0c0c0">
<span style="transform:scaleX(1.054)">NU</span>
<span style="transform:scaleX(0.978)">Exter</span>
<span style="transform:scaleX(1.084)">nal</span>
<span style="transform:scaleX(1.061)">stora</span>
<span style="transform:scaleX(0.958)">ge</span>
</div>
<div class="b" style="left:1816px;top:266px;width:1px;height:89px;background:#1f1f1f;"></div>
<i class="f" style="left:1800px"></i>
<div class="h" style="left:1817px;width:37px;background:#c0c0c0">
<span style="transform:scaleX(1.054)">NU</span>
<span style="transform:scaleX(1.036)">Ware</span>
<span style="transform:scaleX(1.053)">hous</span>
<span style="transform:scaleX(1.084)">ing</span>
<span style="transform:scaleX(0.978)">cos</span>
</div>
<div class="b" style="left:1854px;top:266px;width:1px;height:89px;background:#1f1f1f;"></div>
<i class="f" style="left:1838px"></i>
<div class="h" style="left:1855px;width:37px;background:#c0c0c0">
<span style="transform:scaleX(1.054)">NU</span>
<span style="transform:scaleX(1.053)">Othe</span>
<span style="transform:scaleX(1.143)">r</span>
<span style="transform:scaleX(1.009)">pack</span>
<span style="transform:scaleX(1.027)">agi</span>
</div>
<div class="b" style="left:1892px;top:266px;width:1px;height:89px;background:#1f1f1f;"></div>
<i class="f" style="left:1876px"></i>
<div class="h" style="left:1893px;width:5px;background:#c0c0c0">
<span style="transform:scaleX(1.054)">N</span>
<span style="transform:scaleX(0.872)">F</span>
<span style="transform:scaleX(0.913)">c</span>
<span style="transform:scaleX(1.143)">(</span>
</div>
<div class="b" style="left:1898px;top:266px;width:1px;height:89px;background:#1f1f1f;"></div>
<div class="b gz" style="left:26px;top:357px;width:1016px;height:260px"></div>
<div class="b" style="left:78px;top:356.5px;width:1px;height:260px;background:#adadad;"></div>
<div class="b" style="left:138px;top:356.5px;width:1px;height:260px;background:#adadad;"></div>
<div class="b" style="left:191px;top:356.5px;width:1px;height:260px;background:#adadad;"></div>
<div class="b" style="left:212px;top:356.5px;width:1px;height:260px;background:#adadad;"></div>
<div class="b" style="left:233px;top:356.5px;width:1px;height:260px;background:#adadad;"></div>
<div class="b" style="left:330px;top:356.5px;width:1px;height:260px;background:#adadad;"></div>
<div class="b" style="left:397px;top:356.5px;width:1px;height:260px;background:#adadad;"></div>
<div class="b" style="left:440px;top:356.5px;width:1px;height:260px;background:#adadad;"></div>
<div class="b" style="left:480px;top:356.5px;width:1px;height:260px;background:#adadad;"></div>
<div class="b" style="left:516px;top:356.5px;width:1px;height:260px;background:#adadad;"></div>
<div class="b" style="left:548px;top:356.5px;width:1px;height:260px;background:#adadad;"></div>
<div class="b" style="left:580px;top:356.5px;width:1px;height:260px;background:#adadad;"></div>
<div class="b" style="left:612px;top:356.5px;width:1px;height:260px;background:#adadad;"></div>
<div class="b" style="left:644px;top:356.5px;width:1px;height:260px;background:#adadad;"></div>
<div class="b" style="left:690px;top:356.5px;width:1px;height:260px;background:#adadad;"></div>
<div class="b" style="left:750px;top:356.5px;width:1px;height:260px;background:#adadad;"></div>
<div class="b" style="left:796px;top:356.5px;width:1px;height:260px;background:#adadad;"></div>
<div class="b" style="left:837px;top:356.5px;width:1px;height:260px;background:#adadad;"></div>
<div class="b" style="left:897px;top:356.5px;width:1px;height:260px;background:#adadad;"></div>
<div class="b" style="left:957px;top:356.5px;width:1px;height:260px;background:#adadad;"></div>
<div class="b" style="left:989px;top:356.5px;width:1px;height:260px;background:#adadad;"></div>
<div class="b" style="left:1042px;top:356.5px;width:1px;height:260px;background:#adadad;"></div>
<div class="b" style="left:138px;top:356.5px;width:54px;height:260.5px;background:#73a33e;"></div>
<div class="b" style="left:233px;top:356.5px;width:98px;height:260.5px;background:#c99700;"></div>
<div class="b" style="left:1042px;top:356.5px;width:857px;height:260.5px;background:#73a33e;"></div>
<div class="b" style="left:1688px;top:376px;width:53px;height:121px;background:#0b8e47;"></div>
<div class="b" style="left:26px;top:357.8px;width:52px;height:18.4px;background:#fff;"></div>
<div class="b" style="left:26px;top:616px;width:1873px;height:261px;background:#c6a78e;"></div>
<div class="b" style="left:796px;top:616px;width:247px;height:261px;background:#008ac2;"></div>
<div class="b gw" style="left:26px;top:877px;width:1872px;height:113px"></div>
<div class="b" style="left:78px;top:878px;width:1px;height:112px;background:#d6d6d6;"></div>
<div class="b" style="left:138px;top:878px;width:1px;height:112px;background:#d6d6d6;"></div>
<div class="b" style="left:191px;top:878px;width:1px;height:112px;background:#d6d6d6;"></div>
<div class="b" style="left:212px;top:878px;width:1px;height:112px;background:#d6d6d6;"></div>
<div class="b" style="left:233px;top:878px;width:1px;height:112px;background:#d6d6d6;"></div>
<div class="b" style="left:330px;top:878px;width:1px;height:112px;background:#d6d6d6;"></div>
<div class="b" style="left:397px;top:878px;width:1px;height:112px;background:#d6d6d6;"></div>
<div class="b" style="left:440px;top:878px;width:1px;height:112px;background:#d6d6d6;"></div>
<div class="b" style="left:480px;top:878px;width:1px;height:112px;background:#d6d6d6;"></div>
<div class="b" style="left:516px;top:878px;width:1px;height:112px;background:#d6d6d6;"></div>
<div class="b" style="left:548px;top:878px;width:1px;height:112px;background:#d6d6d6;"></div>
<div class="b" style="left:580px;top:878px;width:1px;height:112px;background:#d6d6d6;"></div>
<div class="b" style="left:612px;top:878px;width:1px;height:112px;background:#d6d6d6;"></div>
<div class="b" style="left:644px;top:878px;width:1px;height:112px;background:#d6d6d6;"></div>
<div class="b" style="left:690px;top:878px;width:1px;height:112px;background:#d6d6d6;"></div>
<div class="b" style="left:750px;top:878px;width:1px;height:112px;background:#d6d6d6;"></div>
<div class="b" style="left:796px;top:878px;width:1px;height:112px;background:#d6d6d6;"></div>
<div class="b" style="left:837px;top:878px;width:1px;height:112px;background:#d6d6d6;"></div>
<div class="b" style="left:897px;top:878px;width:1px;height:112px;background:#d6d6d6;"></div>
<div class="b" style="left:957px;top:878px;width:1px;height:112px;background:#d6d6d6;"></div>
<div class="b" style="left:989px;top:878px;width:1px;height:112px;background:#d6d6d6;"></div>
<div class="b" style="left:1042px;top:878px;width:1px;height:112px;background:#d6d6d6;"></div>
<div class="b" style="left:1080px;top:878px;width:1px;height:112px;background:#d6d6d6;"></div>
<div class="b" style="left:1118px;top:878px;width:1px;height:112px;background:#d6d6d6;"></div>
<div class="b" style="left:1156px;top:878px;width:1px;height:112px;background:#d6d6d6;"></div>
<div class="b" style="left:1194px;top:878px;width:1px;height:112px;background:#d6d6d6;"></div>
<div class="b" style="left:1232px;top:878px;width:1px;height:112px;background:#d6d6d6;"></div>
<div class="b" style="left:1270px;top:878px;width:1px;height:112px;background:#d6d6d6;"></div>
<div class="b" style="left:1308px;top:878px;width:1px;height:112px;background:#d6d6d6;"></div>
<div class="b" style="left:1346px;top:878px;width:1px;height:112px;background:#d6d6d6;"></div>
<div class="b" style="left:1384px;top:878px;width:1px;height:112px;background:#d6d6d6;"></div>
<div class="b" style="left:1422px;top:878px;width:1px;height:112px;background:#d6d6d6;"></div>
<div class="b" style="left:1460px;top:878px;width:1px;height:112px;background:#d6d6d6;"></div>
<div class="b" style="left:1498px;top:878px;width:1px;height:112px;background:#d6d6d6;"></div>
<div class="b" style="left:1536px;top:878px;width:1px;height:112px;background:#d6d6d6;"></div>
<div class="b" style="left:1574px;top:878px;width:1px;height:112px;background:#d6d6d6;"></div>
<div class="b" style="left:1612px;top:878px;width:1px;height:112px;background:#d6d6d6;"></div>
<div class="b" style="left:1650px;top:878px;width:1px;height:112px;background:#d6d6d6;"></div>
<div class="b" style="left:1688px;top:878px;width:1px;height:112px;background:#d6d6d6;"></div>
<div class="b" style="left:1740px;top:878px;width:1px;height:112px;background:#d6d6d6;"></div>
<div class="b" style="left:1778px;top:878px;width:1px;height:112px;background:#d6d6d6;"></div>
<div class="b" style="left:1816px;top:878px;width:1px;height:112px;background:#d6d6d6;"></div>
<div class="b" style="left:1854px;top:878px;width:1px;height:112px;background:#d6d6d6;"></div>
<div class="b" style="left:1892px;top:878px;width:1px;height:112px;background:#d6d6d6;"></div>
<div class="b" style="left:1898px;top:878px;width:1px;height:112px;background:#d6d6d6;"></div>
<div class="c l" style="left:26px;width:52px">
<p><i></i><span class="k0">020</span></p>
<p><i></i><span class="k0">020</span></p>
<p><i></i><span class="k0">020</span></p>
<p><i></i><span class="k0">020</span></p>
<p><i></i><span class="k0">020</span></p>
<p><i></i><span class="k0">020</span></p>
<p><i></i><span class="k0">020</span></p>
<p><i></i><span class="k0">020</span></p>
<p><i></i><span class="k0">020</span></p>
<p><i></i><span class="k0">020</span></p>
<p><i></i><span class="k0">020</span></p>
<p><i></i><span class="k0">020</span></p>
<p><i></i><span class="k0">020</span></p>
<p><i></i><span class="k0">020</span></p>
<p><i></i><span class="k0">020</span></p>
<p><i></i><span class="k0">020</span></p>
<p><i></i><span class="k0">020</span></p>
<p><i></i><span class="k0">020</span></p>
<p><i></i><span class="k0">020</span></p>
<p><i></i><span class="k0">020</span></p>
<p><i></i><span class="k0">020</span></p>
<p><i></i><span class="k0">020</span></p>
<p><i></i><span class="k0">020</span></p>
<p><i></i><span class="k0">020</span></p>
<p><i></i><span class="k0">020</span></p>
<p><i></i><span class="k0">020</span></p>
</div>
<div class="c l" style="left:79px;width:59px">
<p><i></i><span class="k0">10</span></p>
<p><i></i><span class="k0">10</span></p>
<p><i></i><span class="k0">10</span></p>
<p><i></i><span class="k0">10</span></p>
<p><i></i><span class="k0">10</span></p>
<p><i></i><span class="k0">10</span></p>
<p><i></i><span class="k0">10</span></p>
<p><i></i><span class="k0">10</span></p>
<p><i></i><span class="k0">10</span></p>
<p><i></i><span class="k0">10</span></p>
<p><i></i><span class="k0">10</span></p>
<p><i></i><span class="k0">10</span></p>
<p><i></i><span class="k0">10</span></p>
<p><i></i><span class="k0">10</span></p>
<p><i></i><span class="k0">10</span></p>
<p><i></i><span class="k0">10</span></p>
<p><i></i><span class="k0">10</span></p>
<p><i></i><span class="k0">10</span></p>
<p><i></i><span class="k0">10</span></p>
<p><i></i><span class="k0">10</span></p>
<p><i></i><span class="k0">10</span></p>
<p><i></i><span class="k0">10</span></p>
<p><i></i><span class="k0">10</span></p>
<p><i></i><span class="k0">10</span></p>
<p><i></i><span class="k0">10</span></p>
<p><i></i><span class="k0">10</span></p>
</div>
<div class="c l" style="left:139px;width:52px">
<p><span class="k1">Z</span></p>
<p><span class="k1">Z</span></p>
<p><span class="k1">Z</span></p>
<p><span class="k1">Z</span></p>
<p><span class="k1">Z</span></p>
<p><span class="k1">Z</span></p>
<p><span class="k1">Z</span></p>
<p><span class="k1">Z</span></p>
<p><span class="k1">Z</span></p>
<p><span class="k1">Z</span></p>
<p><span class="k1">Z</span></p>
<p><span class="k1">Z</span></p>
<p><span class="k1">Z</span></p>
<p><span class="k1">Z</span></p>
<p><span class="k1">Z</span></p>
<p><span class="k1">Z</span></p>
<p><span class="k1">Z</span></p>
<p><span class="k1">Z</span></p>
<p><span class="k1">Z</span></p>
<p><span class="k1">Z</span></p>
<p><span class="k1">Z</span></p>
<p><span class="k1">Z</span></p>
<p><span class="k1">Z</span></p>
<p><span class="k1">Z</span></p>
<p><span class="k1">Z</span></p>
<p><span class="k1">Z</span></p>
</div>
<div class="c r" style="left:234px;width:96px">
<p><span class="k2">31-10-2023</span></p>
<p><span class="k2">31-10-2023</span></p>
<p><span class="k2">31-10-2023</span></p>
<p><span class="k2">31-10-2023</span></p>
<p><span class="k2">31-10-2023</span></p>
<p><span class="k2">31-10-2023</span></p>
<p><span class="k2">31-10-2023</span></p>
<p><span class="k2">31-10-2023</span></p>
<p><span class="k2">31-10-2023</span></p>
<p><span class="k2">31-10-2023</span></p>
<p><span class="k2">31-10-2023</span></p>
<p><span class="k2">31-10-2023</span></p>
<p><span class="k2">31-10-2023</span></p>
<p><span class="k2">31-10-2023</span></p>
<p><span class="k2">31-10-2023</span></p>
<p><span class="k2">31-10-2023</span></p>
<p><span class="k2">31-10-2023</span></p>
<p><span class="k2">31-10-2023</span></p>
<p><span class="k2">31-10-2023</span></p>
<p><span class="k2">31-10-2023</span></p>
<p><span class="k2">31-10-2023</span></p>
<p><span class="k2">31-10-2023</span></p>
<p><span class="k2">31-10-2023</span></p>
<p><span class="k2">31-10-2023</span></p>
<p><span class="k2">31-10-2023</span></p>
<p><span class="k2">31-10-2023</span></p>
</div>
<div class="c l" style="left:331px;width:66px">
<p></p>
<p><i></i><span class="k0">326183</span></p>
<p><i></i><span class="k0">326183</span></p>
<p><i></i><span class="k0">326183</span></p>
<p><i></i><span class="k0">326183</span></p>
<p><i></i><span class="k0">2500830</span></p>
<p><i></i><span class="k0">326183</span></p>
<p><i></i><span class="k3">171144</span></p>
<p><i></i><span class="k3">171144</span></p>
<p><i></i><span class="k3">171144</span></p>
<p><i></i><span class="k3">171144</span></p>
<p><i></i><span class="k3">171144</span></p>
<p><i></i><span class="k3">171144</span></p>
<p></p>
<p><i></i><span class="k0">326183</span></p>
<p><i></i><span class="k0">326183</span></p>
<p><i></i><span class="k0">326183</span></p>
<p><i></i><span class="k0">326183</span></p>
<p><i></i><span class="k0">2500830</span></p>
<p><i></i><span class="k0">326183</span></p>
<p><i></i><span class="k3">171144</span></p>
<p><i></i><span class="k3">171144</span></p>
<p><i></i><span class="k3">171144</span></p>
<p><i></i><span class="k3">171144</span></p>
<p><i></i><span class="k3">171144</span></p>
<p><i></i><span class="k3">171144</span></p>
</div>
<div class="c l" style="left:398px;width:42px">
<p><i></i><span class="k0">27342</span></p>
<p><i></i><span class="k0">27342</span></p>
<p><i></i><span class="k0">27342</span></p>
<p><i></i><span class="k0">27342</span></p>
<p><i></i><span class="k0">27342</span></p>
<p><i></i><span class="k0">27342</span></p>
<p><i></i><span class="k0">27342</span></p>
<p><i></i><span class="k0">27342</span></p>
<p><i></i><span class="k0">27342</span></p>
<p><i></i><span class="k0">27342</span></p>
<p><i></i><span class="k0">27342</span></p>
<p><i></i><span class="k0">27342</span></p>
<p><i></i><span class="k0">27342</span></p>
<p><i></i><span class="k0">27342</span></p>
<p><i></i><span class="k0">27342</span></p>
<p><i></i><span class="k0">27342</span></p>
<p><i></i><span class="k0">27342</span></p>
<p><i></i><span class="k0">27342</span></p>
<p><i></i><span class="k0">27342</span></p>
<p><i></i><span class="k0">27342</span></p>
<p><i></i><span class="k0">27342</span></p>
<p><i></i><span class="k0">27342</span></p>
<p><i></i><span class="k0">27342</span></p>
<p><i></i><span class="k0">27342</span></p>
<p><i></i><span class="k0">27342</span></p>
<p><i></i><span class="k0">27342</span></p>
</div>
<div class="c l" style="left:481px;width:35px">
<p><span class="k4">EUR</span></p>
<p><span class="k4">EUR</span></p>
<p><span class="k4">EUR</span></p>
<p><span class="k4">EUR</span></p>
<p><span class="k4">EUR</span></p>
<p><span class="k4">EUR</span></p>
<p><span class="k4">EUR</span></p>
<p><span class="k4">EUR</span></p>
<p><span class="k4">EUR</span></p>
<p><span class="k4">EUR</span></p>
<p><span class="k4">EUR</span></p>
<p><span class="k4">EUR</span></p>
<p><span class="k4">EUR</span></p>
<p><span class="k4">EUR</span></p>
<p><span class="k4">EUR</span></p>
<p><span class="k4">EUR</span></p>
<p><span class="k4">EUR</span></p>
<p><span class="k4">EUR</span></p>
<p><span class="k4">EUR</span></p>
<p><span class="k4">EUR</span></p>
<p><span class="k4">EUR</span></p>
<p><span class="k4">EUR</span></p>
<p><span class="k4">EUR</span></p>
<p><span class="k4">EUR</span></p>
<p><span class="k4">EUR</span></p>
<p><span class="k4">EUR</span></p>
</div>
<div class="c l" style="left:549px;width:31px">
<p><i></i><span class="k0">0</span></p>
<p><i></i><span class="k0">0</span></p>
<p><i></i><span class="k0">0</span></p>
<p><i></i><span class="k0">0</span></p>
<p><i></i><span class="k0">0</span></p>
<p><i></i><span class="k0">0</span></p>
<p><i></i><span class="k0">0</span></p>
<p><i></i><span class="k0">0</span></p>
<p><i></i><span class="k0">0</span></p>
<p><i></i><span class="k0">0</span></p>
<p><i></i><span class="k0">0</span></p>
<p><i></i><span class="k0">0</span></p>
<p><i></i><span class="k0">0</span></p>
<p><i></i><span class="k0">0</span></p>
<p><i></i><span class="k0">0</span></p>
<p><i></i><span class="k0">0</span></p>
<p><i></i><span class="k0">0</span></p>
<p><i></i><span class="k0">0</span></p>
<p><i></i><span class="k0">0</span></p>
<p><i></i><span class="k0">0</span></p>
<p><i></i><span class="k0">0</span></p>
<p><i></i><span class="k0">0</span></p>
<p><i></i><span class="k0">0</span></p>
<p><i></i><span class="k0">0</span></p>
<p><i></i><span class="k0">0</span></p>
<p><i></i><span class="k0">0</span></p>
</div>
<div class="c l" style="left:645px;width:45px">
<p><i></i><span class="k0">6080</span></p>
<p><i></i><span class="k0">6080</span></p>
<p><i></i><span class="k0">6080</span></p>
<p><i></i><span class="k0">6080</span></p>
<p><i></i><span class="k0">6080</span></p>
<p><i></i><span class="k0">6080</span></p>
<p><i></i><span class="k0">6080</span></p>
<p><i></i><span class="k0">6080</span></p>
<p><i></i><span class="k0">6080</span></p>
<p><i></i><span class="k0">6080</span></p>
<p><i></i><span class="k0">6080</span></p>
<p><i></i><span class="k0">6080</span></p>
<p><i></i><span class="k0">6080</span></p>
<p><i></i><span class="k0">6080</span></p>
<p><i></i><span class="k0">6080</span></p>
<p><i></i><span class="k0">6080</span></p>
<p><i></i><span class="k0">6080</span></p>
<p><i></i><span class="k0">6080</span></p>
<p><i></i><span class="k0">6080</span></p>
<p><i></i><span class="k0">6080</span></p>
<p><i></i><span class="k0">6080</span></p>
<p><i></i><span class="k0">6080</span></p>
<p><i></i><span class="k0">6080</span></p>
<p><i></i><span class="k0">6080</span></p>
<p><i></i><span class="k0">6080</span></p>
<p><i></i><span class="k0">6080</span></p>
</div>
<div class="c l" style="left:691px;width:59px">
<p><span class="k1">CHEF</span></p>
<p><span class="k1">CHEF</span></p>
<p><span class="k1">CHEF</span></p>
<p><span class="k1">CHEF</span></p>
<p><span class="k1">CHEF</span></p>
<p><span class="k1">CHEF</span></p>
<p><span class="k1">CHEF</span></p>
<p><span class="k1">CHEF</span></p>
<p><span class="k1">CHEF</span></p>
<p><span class="k1">CHEF</span></p>
<p><span class="k1">CHEF</span></p>
<p><span class="k1">CHEF</span></p>
<p><span class="k1">CHEF</span></p>
<p><span class="k1">CHEF</span></p>
<p><span class="k1">CHEF</span></p>
<p><span class="k1">CHEF</span></p>
<p><span class="k1">CHEF</span></p>
<p><span class="k1">CHEF</span></p>
<p><span class="k1">CHEF</span></p>
<p><span class="k1">CHEF</span></p>
<p><span class="k1">CHEF</span></p>
<p><span class="k1">CHEF</span></p>
<p><span class="k1">CHEF</span></p>
<p><span class="k1">CHEF</span></p>
<p><span class="k1">CHEF</span></p>
<p><span class="k1">CHEF</span></p>
</div>
<div class="c l" style="left:751px;width:45px">
<p><span class="k5">TAH</span></p>
<p><span class="k5">TAH</span></p>
<p><span class="k5">TAH</span></p>
<p><span class="k5">TAH</span></p>
<p><span class="k5">TAH</span></p>
<p><span class="k5">TAH</span></p>
<p><span class="k5">TAH</span></p>
<p><span class="k5">TAH</span></p>
<p><span class="k5">TAH</span></p>
<p><span class="k5">TAH</span></p>
<p><span class="k5">TAH</span></p>
<p><span class="k5">TAH</span></p>
<p><span class="k5">TAH</span></p>
<p><span class="k5">TAH</span></p>
<p><span class="k5">TAH</span></p>
<p><span class="k5">TAH</span></p>
<p><span class="k5">TAH</span></p>
<p><span class="k5">TAH</span></p>
<p><span class="k5">TAH</span></p>
<p><span class="k5">TAH</span></p>
<p><span class="k5">TAH</span></p>
<p><span class="k5">TAH</span></p>
<p><span class="k5">TAH</span></p>
<p><span class="k5">TAH</span></p>
<p><span class="k5">TAH</span></p>
<p><span class="k5">TAH</span></p>
</div>
<div class="c l" style="left:797px;width:40px">
<p><span class="k6">73T0</span></p>
<p><span class="k6">73T0</span></p>
<p><span class="k6">73T0</span></p>
<p><span class="k6">73T0</span></p>
<p><span class="k6">73T0</span></p>
<p><span class="k6">73T0</span></p>
<p><span class="k6">73T0</span></p>
<p><span class="k6">73T0</span></p>
<p><span class="k6">73T0</span></p>
<p><span class="k6">73T0</span></p>
<p><span class="k6">73T0</span></p>
<p><span class="k6">73T0</span></p>
<p><span class="k6">73T0</span></p>
<p><span class="k0">3490</span></p>
<p><span class="k0">3490</span></p>
<p><span class="k0">3490</span></p>
<p><span class="k0">3490</span></p>
<p><span class="k0">3490</span></p>
<p><span class="k0">3490</span></p>
<p><span class="k0">3490</span></p>
<p><span class="k0">3490</span></p>
<p><span class="k0">3490</span></p>
<p><span class="k0">3490</span></p>
<p><span class="k0">3490</span></p>
<p><span class="k0">3490</span></p>
<p><span class="k0">3490</span></p>
</div>
<div class="c l" style="left:838px;width:59px">
<p><span class="k4">CH3T</span></p>
<p><span class="k4">CH3T</span></p>
<p><span class="k4">CH3T</span></p>
<p><span class="k4">CH3T</span></p>
<p><span class="k4">CH3T</span></p>
<p><span class="k4">CH3T</span></p>
<p><span class="k4">CH3T</span></p>
<p><span class="k4">CH3T</span></p>
<p><span class="k4">CH3T</span></p>
<p><span class="k4">CH3T</span></p>
<p><span class="k4">CH3T</span></p>
<p><span class="k4">CH3T</span></p>
<p><span class="k4">CH3T</span></p>
<p><span class="k0">49</span></p>
<p><span class="k0">49</span></p>
<p><span class="k0">49</span></p>
<p><span class="k0">49</span></p>
<p><span class="k0">49</span></p>
<p><span class="k0">49</span></p>
<p><span class="k0">49</span></p>
<p><span class="k0">49</span></p>
<p><span class="k0">49</span></p>
<p><span class="k0">49</span></p>
<p><span class="k0">49</span></p>
<p><span class="k0">49</span></p>
<p><span class="k0">49</span></p>
</div>
<div class="c l" style="left:898px;width:59px">
<p><span class="k6">73T0</span></p>
<p><span class="k6">73T0</span></p>
<p><span class="k6">73T0</span></p>
<p><span class="k6">73T0</span></p>
<p><span class="k6">73T0</span></p>
<p><span class="k6">73T0</span></p>
<p><span class="k6">73T0</span></p>
<p><span class="k6">73T0</span></p>
<p><span class="k6">73T0</span></p>
<p><span class="k6">73T0</span></p>
<p><span class="k6">73T0</span></p>
<p><span class="k6">73T0</span></p>
<p><span class="k6">73T0</span></p>
<p><i></i><span class="k0">3490</span></p>
<p><i></i><span class="k0">3490</span></p>
<p><i></i><span class="k0">3490</span></p>
<p><i></i><span class="k0">3490</span></p>
<p><i></i><span class="k0">3490</span></p>
<p><i></i><span class="k0">3490</span></p>
<p><i></i><span class="k0">3490</span></p>
<p><i></i><span class="k0">3490</span></p>
<p><i></i><span class="k0">3490</span></p>
<p><i></i><span class="k0">3490</span></p>
<p><i></i><span class="k0">3490</span></p>
<p><i></i><span class="k0">3490</span></p>
<p><i></i><span class="k0">3490</span></p>
</div>
<div class="c l" style="left:958px;width:31px">
<p><span class="k4">CH</span></p>
<p><span class="k4">CH</span></p>
<p><span class="k4">CH</span></p>
<p><span class="k4">CH</span></p>
<p><span class="k4">CH</span></p>
<p><span class="k4">CH</span></p>
<p><span class="k4">CH</span></p>
<p><span class="k4">CH</span></p>
<p><span class="k4">CH</span></p>
<p><span class="k4">CH</span></p>
<p><span class="k4">CH</span></p>
<p><span class="k4">CH</span></p>
<p><span class="k4">CH</span></p>
<p><span class="k7">SP</span></p>
<p><span class="k7">SP</span></p>
<p><span class="k7">SP</span></p>
<p><span class="k7">SP</span></p>
<p><span class="k7">SP</span></p>
<p><span class="k7">SP</span></p>
<p><span class="k7">SP</span></p>
<p><span class="k7">SP</span></p>
<p><span class="k7">SP</span></p>
<p><span class="k7">SP</span></p>
<p><span class="k7">SP</span></p>
<p><span class="k7">SP</span></p>
<p><span class="k7">SP</span></p>
</div>
<div class="c l" style="left:990px;width:52px">
<p><span class="k4">CHFLO</span></p>
<p><span class="k4">CHFLO</span></p>
<p><span class="k4">CHFLO</span></p>
<p><span class="k4">CHFLO</span></p>
<p><span class="k4">CHFLO</span></p>
<p><span class="k4">CHFLO</span></p>
<p><span class="k4">CHFLO</span></p>
<p><span class="k4">CHFLO</span></p>
<p><span class="k4">CHFLO</span></p>
<p><span class="k4">CHFLO</span></p>
<p><span class="k4">CHFLO</span></p>
<p><span class="k4">CHFLO</span></p>
<p><span class="k4">CHFLO</span></p>
<p><span class="k8">SPPOL</span></p>
<p><span class="k8">SPPOL</span></p>
<p><span class="k8">SPPOL</span></p>
<p><span class="k8">SPPOL</span></p>
<p><span class="k8">SPPOL</span></p>
<p><span class="k8">SPPOL</span></p>
<p><span class="k8">SPPOL</span></p>
<p><span class="k8">SPPOL</span></p>
<p><span class="k8">SPPOL</span></p>
<p><span class="k8">SPPOL</span></p>
<p><span class="k8">SPPOL</span></p>
<p><span class="k8">SPPOL</span></p>
<p><span class="k8">SPPOL</span></p>
</div>
<div class="c r" style="left:1043px;width:37px">
<p><span class="k9">0.000</span></p>
<p><span class="k9">0.000</span></p>
<p><span class="k9">0.000</span></p>
<p><span class="k9">0.000</span></p>
<p><span class="k9">0.000</span></p>
<p><span class="k9">0.000</span></p>
<p><span class="k9">0.000</span></p>
<p><span class="k9">0.000</span></p>
<p><span class="k9">0.000</span></p>
<p><span class="k9">0.000</span></p>
<p><span class="k9">0.000</span></p>
<p><span class="k9">0.000</span></p>
<p><span class="k9">0.000</span></p>
<p><span class="k9">0.000</span></p>
<p><span class="k9">0.000</span></p>
<p><span class="k9">0.000</span></p>
<p><span class="k9">0.000</span></p>
<p><span class="k9">0.000</span></p>
<p><span class="k9">0.000</span></p>
<p><span class="k9">0.000</span></p>
<p><span class="k9">0.000</span></p>
<p><span class="k9">0.000</span></p>
<p><span class="k9">0.000</span></p>
<p><span class="k9">0.000</span></p>
<p><span class="k9">0.000</span></p>
<p><span class="k9">0.000</span></p>
</div>
<div class="c r" style="left:1081px;width:37px">
<p><span class="k9">0.00</span></p>
<p><span class="k9">0.00</span></p>
<p><span class="k9">0.00</span></p>
<p><span class="k9">0.00</span></p>
<p><span class="k9">0.00</span></p>
<p><span class="k9">0.00</span></p>
<p><span class="k9">0.00</span></p>
<p><span class="k9">0.00</span></p>
<p><span class="k9">0.00</span></p>
<p><span class="k9">0.00</span></p>
<p><span class="k9">0.00</span></p>
<p><span class="k9">0.00</span></p>
<p><span class="k9">0.00</span></p>
<p><span class="k9">0.00</span></p>
<p><span class="k9">0.00</span></p>
<p><span class="k9">0.00</span></p>
<p><span class="k9">0.00</span></p>
<p><span class="k9">0.00</span></p>
<p><span class="k9">0.00</span></p>
<p><span class="k9">0.00</span></p>
<p><span class="k9">0.00</span></p>
<p><span class="k9">0.00</span></p>
<p><span class="k9">0.00</span></p>
<p><span class="k9">0.00</span></p>
<p><span class="k9">0.00</span></p>
<p><span class="k9">0.00</span></p>
</div>
<div class="c r" style="left:1119px;width:37px">
<p><span class="k9">0.00</span></p>
<p><span class="k9">0.00</span></p>
<p><span class="k9">0.00</span></p>
<p><span class="k9">0.00</span></p>
<p><span class="k9">0.00</span></p>
<p><span class="k9">0.00</span></p>
<p><span class="k9">0.00</span></p>
<p><span class="k9">0.00</span></p>
<p><span class="k9">0.00</span></p>
<p><span class="k9">0.00</span></p>
<p><span class="k9">0.00</span></p>
<p><span class="k9">0.00</span></p>
<p><span class="k9">0.00</span></p>
<p><span class="k9">0.00</span></p>
<p><span class="k9">0.00</span></p>
<p><span class="k9">0.00</span></p>
<p><span class="k9">0.00</span></p>
<p><span class="k9">0.00</span></p>
<p><span class="k9">0.00</span></p>
<p><span class="k9">0.00</span></p>
<p><span class="k9">0.00</span></p>
<p><span class="k9">0.00</span></p>
<p><span class="k9">0.00</span></p>
<p><span class="k9">0.00</span></p>
<p><span class="k9">0.00</span></p>
<p><span class="k9">0.00</span></p>
</div>
<div class="c r" style="left:1157px;width:37px">
<p><span class="k9">0.00</span></p>
<p><span class="k9">0.00</span></p>
<p><span class="k9">0.00</span></p>
<p><span class="k9">0.00</span></p>
<p><span class="k9">0.00</span></p>
<p><span class="k9">0.00</span></p>
<p><span class="k9">0.00</span></p>
<p><span class="k9">0.00</span></p>
<p><span class="k9">0.00</span></p>
<p><span class="k9">0.00</span></p>
<p><span class="k9">0.00</span></p>
<p><span class="k9">0.00</span></p>
<p><span class="k9">0.00</span></p>
<p><span class="k9">0.00</span></p>
<p><span class="k9">0.00</span></p>
<p><span class="k9">0.00</span></p>
<p><span class="k9">0.00</span></p>
<p><span class="k9">0.00</span></p>
<p><span class="k9">0.00</span></p>
<p><span class="k9">0.00</span></p>
<p><span class="k9">0.00</span></p>
<p><span class="k9">0.00</span></p>
<p><span class="k9">0.00</span></p>
<p><span class="k9">0.00</span></p>
<p><span class="k9">0.00</span></p>
<p><span class="k9">0.00</span></p>
</div>
<div class="c r" style="left:1195px;width:37px">
<p><span class="k9">0.00</span></p>
<p><span class="k9">0.00</span></p>
<p><span class="k9">0.00</span></p>
<p><span class="k9">0.00</span></p>
<p><span class="k9">0.00</span></p>
<p><span class="k9">0.00</span></p>
<p><span class="k9">0.00</span></p>
<p><span class="k9">0.00</span></p>
<p><span class="k9">0.00</span></p>
<p><span class="k9">0.00</span></p>
<p><span class="k9">0.00</span></p>
<p><span class="k9">0.00</span></p>
<p><span class="k9">0.00</span></p>
<p><span class="k9">0.00</span></p>
<p><span class="k9">0.00</span></p>
<p><span class="k9">0.00</span></p>
<p><span class="k9">0.00</span></p>
<p><span class="k9">0.00</span></p>
<p><span class="k9">0.00</span></p>
<p><span class="k9">0.00</span></p>
<p><span class="k9">0.00</span></p>
<p><span class="k9">0.00</span></p>
<p><span class="k9">0.00</span></p>
<p><span class="k9">0.00</span></p>
<p><span class="k9">0.00</span></p>
<p><span class="k9">0.00</span></p>
</div>
<div class="c r" style="left:1233px;width:37px">
<p><span class="k9">0.00</span></p>
<p><span class="k9">0.00</span></p>
<p><span class="k9">0.00</span></p>
<p><span class="k9">0.00</span></p>
<p><span class="k9">0.00</span></p>
<p><span class="k9">0.00</span></p>
<p><span class="k9">0.00</span></p>
<p><span class="k9">0.00</span></p>
<p><span class="k9">0.00</span></p>
<p><span class="k9">0.00</span></p>
<p><span class="k9">0.00</span></p>
<p><span class="k9">0.00</span></p>
<p><span class="k9">0.00</span></p>
<p><span class="k9">0.00</span></p>
<p><span class="k9">0.00</span></p>
<p><span class="k9">0.00</span></p>
<p><span class="k9">0.00</span></p>
<p><span class="k9">0.00</span></p>
<p><span class="k9">0.00</span></p>
<p><span class="k9">0.00</span></p>
<p><span class="k9">0.00</span></p>
<p><span class="k9">0.00</span></p>
<p><span class="k9">0.00</span></p>
<p><span class="k9">0.00</span></p>
<p><span class="k9">0.00</span></p>
<p><span class="k9">0.00</span></p>
</div>
<div class="c r" style="left:1271px;width:37px">
<p><span class="k9">0.00</span></p>
<p><span class="k9">0.00</span></p>
<p><span class="k9">0.00</span></p>
<p><span class="k9">0.00</span></p>
<p><span class="k9">0.00</span></p>
<p><span class="k9">0.00</span></p>
<p><span class="k9">0.00</span></p>
<p><span class="k9">0.00</span></p>
<p><span class="k9">0.00</span></p>
<p><span class="k9">0.00</span></p>
<p><span class="k9">0.00</span></p>
<p><span class="k9">0.00</span></p>
<p><span class="k9">0.00</span></p>
<p><span class="k9">0.00</span></p>
<p><span class="k9">0.00</span></p>
<p><span class="k9">0.00</span></p>
<p><span class="k9">0.00</span></p>
<p><span class="k9">0.00</span></p>
<p><span class="k9">0.00</span></p>
<p><span class="k9">0.00</span></p>
<p><span class="k9">0.00</span></p>
<p><span class="k9">0.00</span></p>
<p><span class="k9">0.00</span></p>
<p><span class="k9">0.00</span></p>
<p><span class="k9">0.00</span></p>
<p><span class="k9">0.00</span></p>
</div>
<div class="c r" style="left:1309px;width:37px">
<p><span class="k9">0.00</span></p>
<p><span class="k9">0.00</span></p>
<p><span class="k9">0.00</span></p>
<p><span class="k9">0.00</span></p>
<p><span class="k9">0.00</span></p>
<p><span class="k9">0.00</span></p>
<p><span class="k9">0.00</span></p>
<p><span class="k9">0.00</span></p>
<p><span class="k9">0.00</span></p>
<p><span class="k9">0.00</span></p>
<p><span class="k9">0.00</span></p>
<p><span class="k9">0.00</span></p>
<p><span class="k9">0.00</span></p>
<p><span class="k9">0.00</span></p>
<p><span class="k9">0.00</span></p>
<p><span class="k9">0.00</span></p>
<p><span class="k9">0.00</span></p>
<p><span class="k9">0.00</span></p>
<p><span class="k9">0.00</span></p>
<p><span class="k9">0.00</span></p>
<p><span class="k9">0.00</span></p>
<p><span class="k9">0.00</span></p>
<p><span class="k9">0.00</span></p>
<p><span class="k9">0.00</span></p>
<p><span class="k9">0.00</span></p>
<p><span class="k9">0.00</span></p>
</div>
<div class="c r" style="left:1347px;width:37px">
<p><span class="k9">0.00</span></p>
<p><span class="k9">0.00</span></p>
<p><span class="k9">0.00</span></p>
<p><span class="k9">0.00</span></p>
<p><span class="k9">0.00</span></p>
<p><span class="k9">0.00</span></p>
<p><span class="k9">0.00</span></p>
<p><span class="k9">0.00</span></p>
<p><span class="k9">0.00</span></p>
<p><span class="k9">0.00</span></p>
<p><span class="k9">0.00</span></p>
<p><span class="k9">0.00</span></p>
<p><span class="k9">0.00</span></p>
<p><span class="k9">0.00</span></p>
<p><span class="k9">0.00</span></p>
<p><span class="k9">0.00</span></p>
<p><span class="k9">0.00</span></p>
<p><span class="k9">0.00</span></p>
<p><span class="k9">0.00</span></p>
<p><span class="k9">0.00</span></p>
<p><span class="k9">0.00</span></p>
<p><span class="k9">0.00</span></p>
<p><span class="k9">0.00</span></p>
<p><span class="k9">0.00</span></p>
<p><span class="k9">0.00</span></p>
<p><span class="k9">0.00</span></p>
</div>
<div class="c r" style="left:1385px;width:37px">
<p><span class="k9">0.00</span></p>
<p><span class="k9">0.00</span></p>
<p><span class="k9">0.00</span></p>
<p><span class="k9">0.00</span></p>
<p><span class="k9">0.00</span></p>
<p><span class="k9">0.00</span></p>
<p><span class="k9">0.00</span></p>
<p><span class="k9">0.00</span></p>
<p><span class="k9">0.00</span></p>
<p><span class="k9">0.00</span></p>
<p><span class="k9">0.00</span></p>
<p><span class="k9">0.00</span></p>
<p><span class="k9">0.00</span></p>
<p><span class="k9">0.00</span></p>
<p><span class="k9">0.00</span></p>
<p><span class="k9">0.00</span></p>
<p><span class="k9">0.00</span></p>
<p><span class="k9">0.00</span></p>
<p><span class="k9">0.00</span></p>
<p><span class="k9">0.00</span></p>
<p><span class="k9">0.00</span></p>
<p><span class="k9">0.00</span></p>
<p><span class="k9">0.00</span></p>
<p><span class="k9">0.00</span></p>
<p><span class="k9">0.00</span></p>
<p><span class="k9">0.00</span></p>
</div>
<div class="c r" style="left:1423px;width:37px">
<p><span class="k9">0.00</span></p>
<p><span class="k9">0.00</span></p>
<p><span class="k9">0.00</span></p>
<p><span class="k9">0.00</span></p>
<p><span class="k9">0.00</span></p>
<p><span class="k9">0.00</span></p>
<p><span class="k9">0.00</span></p>
<p><span class="k9">0.00</span></p>
<p><span class="k9">0.00</span></p>
<p><span class="k9">0.00</span></p>
<p><span class="k9">0.00</span></p>
<p><span class="k9">0.00</span></p>
<p><span class="k9">0.00</span></p>
<p><span class="k9">0.00</span></p>
<p><span class="k9">0.00</span></p>
<p><span class="k9">0.00</span></p>
<p><span class="k9">0.00</span></p>
<p><span class="k9">0.00</span></p>
<p><span class="k9">0.00</span></p>
<p><span class="k9">0.00</span></p>
<p><span class="k9">0.00</span></p>
<p><span class="k9">0.00</span></p>
<p><span class="k9">0.00</span></p>
<p><span class="k9">0.00</span></p>
<p><span class="k9">0.00</span></p>
<p><span class="k9">0.00</span></p>
</div>
<div class="c r" style="left:1461px;width:37px">
<p><span class="k9">0.000</span></p>
<p><span class="k9">0.000</span></p>
<p><span class="k9">0.000</span></p>
<p><span class="k9">0.000</span></p>
<p><span class="k9">0.000</span></p>
<p><span class="k9">0.000</span></p>
<p><span class="k9">0.000</span></p>
<p><span class="k9">0.000</span></p>
<p><span class="k9">0.000</span></p>
<p><span class="k9">0.000</span></p>
<p><span class="k9">0.000</span></p>
<p><span class="k9">0.000</span></p>
<p><span class="k9">0.000</span></p>
<p><span class="k9">0.000</span></p>
<p><span class="k9">0.000</span></p>
<p><span class="k9">0.000</span></p>
<p><span class="k9">0.000</span></p>
<p><span class="k9">0.000</span></p>
<p><span class="k9">0.000</span></p>
<p><span class="k9">0.000</span></p>
<p><span class="k9">0.000</span></p>
<p><span class="k9">0.000</span></p>
<p><span class="k9">0.000</span></p>
<p><span class="k9">0.000</span></p>
<p><span class="k9">0.000</span></p>
<p><span class="k9">0.000</span></p>
</div>
<div class="c r" style="left:1499px;width:37px">
<p><span class="k9">0.00</span></p>
<p><span class="k9">0.00</span></p>
<p><span class="k9">0.00</span></p>
<p><span class="k9">0.00</span></p>
<p><span class="k9">0.00</span></p>
<p><span class="k9">0.00</span></p>
<p><span class="k9">0.00</span></p>
<p><span class="k9">0.00</span></p>
<p><span class="k9">0.00</span></p>
<p><span class="k9">0.00</span></p>
<p><span class="k9">0.00</span></p>
<p><span class="k9">0.00</span></p>
<p><span class="k9">0.00</span></p>
<p><span class="k9">0.00</span></p>
<p><span class="k9">0.00</span></p>
<p><span class="k9">0.00</span></p>
<p><span class="k9">0.00</span></p>
<p><span class="k9">0.00</span></p>
<p><span class="k9">0.00</span></p>
<p><span class="k9">0.00</span></p>
<p><span class="k9">0.00</span></p>
<p><span class="k9">0.00</span></p>
<p><span class="k9">0.00</span></p>
<p><span class="k9">0.00</span></p>
<p><span class="k9">0.00</span></p>
<p><span class="k9">0.00</span></p>
</div>
<div class="c r" style="left:1537px;width:37px">
<p><span class="k9">0.00</span></p>
<p><span class="k9">0.00</span></p>
<p><span class="k9">0.00</span></p>
<p><span class="k9">0.00</span></p>
<p><span class="k9">0.00</span></p>
<p><span class="k9">0.00</span></p>
<p><span class="k9">0.00</span></p>
<p><span class="k9">0.00</span></p>
<p><span class="k9">0.00</span></p>
<p><span class="k9">0.00</span></p>
<p><span class="k9">0.00</span></p>
<p><span class="k9">0.00</span></p>
<p><span class="k9">0.00</span></p>
<p><span class="k9">0.00</span></p>
<p><span class="k9">0.00</span></p>
<p><span class="k9">0.00</span></p>
<p><span class="k9">0.00</span></p>
<p><span class="k9">0.00</span></p>
<p><span class="k9">0.00</span></p>
<p><span class="k9">0.00</span></p>
<p><span class="k9">0.00</span></p>
<p><span class="k9">0.00</span></p>
<p><span class="k9">0.00</span></p>
<p><span class="k9">0.00</span></p>
<p><span class="k9">0.00</span></p>
<p><span class="k9">0.00</span></p>
</div>
<div class="c r" style="left:1575px;width:37px">
<p><span class="k9">0.00</span></p>
<p><span class="k9">0.00</span></p>
<p><span class="k9">0.00</span></p>
<p><span class="k9">0.00</span></p>
<p><span class="k9">0.00</span></p>
<p><span class="k9">0.00</span></p>
<p><span class="k9">0.00</span></p>
<p><span class="k9">0.00</span></p>
<p><span class="k9">0.00</span></p>
<p><span class="k9">0.00</span></p>
<p><span class="k9">0.00</span></p>
<p><span class="k9">0.00</span></p>
<p><span class="k9">0.00</span></p>
<p><span class="k9">0.00</span></p>
<p><span class="k9">0.00</span></p>
<p><span class="k9">0.00</span></p>
<p><span class="k9">0.00</span></p>
<p><span class="k9">0.00</span></p>
<p><span class="k9">0.00</span></p>
<p><span class="k9">0.00</span></p>
<p><span class="k9">0.00</span></p>
<p><span class="k9">0.00</span></p>
<p><span class="k9">0.00</span></p>
<p><span class="k9">0.00</span></p>
<p><span class="k9">0.00</span></p>
<p><span class="k9">0.00</span></p>
</div>
<div class="c r" style="left:1613px;width:37px">
<p><span class="k9">0.00</span></p>
<p><span class="k9">0.00</span></p>
<p><span class="k9">0.00</span></p>
<p><span class="k9">0.00</span></p>
<p><span class="k9">0.00</span></p>
<p><span class="k9">0.00</span></p>
<p><span class="k9">0.00</span></p>
<p><span class="k9">0.00</span></p>
<p><span class="k9">0.00</span></p>
<p><span class="k9">0.00</span></p>
<p><span class="k9">0.00</span></p>
<p><span class="k9">0.00</span></p>
<p><span class="k9">0.00</span></p>
<p><span class="k9">0.00</span></p>
<p><span class="k9">0.00</span></p>
<p><span class="k9">0.00</span></p>
<p><span class="k9">0.00</span></p>
<p><span class="k9">0.00</span></p>
<p><span class="k9">0.00</span></p>
<p><span class="k9">0.00</span></p>
<p><span class="k9">0.00</span></p>
<p><span class="k9">0.00</span></p>
<p><span class="k9">0.00</span></p>
<p><span class="k9">0.00</span></p>
<p><span class="k9">0.00</span></p>
<p><span class="k9">0.00</span></p>
</div>
<div class="c r" style="left:1651px;width:37px">
<p><span class="k9">0.00</span></p>
<p><span class="k9">0.00</span></p>
<p><span class="k9">0.00</span></p>
<p><span class="k9">0.00</span></p>
<p><span class="k9">0.00</span></p>
<p><span class="k9">0.00</span></p>
<p><span class="k9">0.00</span></p>
<p><span class="k9">0.00</span></p>
<p><span class="k9">0.00</span></p>
<p><span class="k9">0.00</span></p>
<p><span class="k9">0.00</span></p>
<p><span class="k9">0.00</span></p>
<p><span class="k9">0.00</span></p>
<p><span class="k9">0.00</span></p>
<p><span class="k9">0.00</span></p>
<p><span class="k9">0.00</span></p>
<p><span class="k9">0.00</span></p>
<p><span class="k9">0.00</span></p>
<p><span class="k9">0.00</span></p>
<p><span class="k9">0.00</span></p>
<p><span class="k9">0.00</span></p>
<p><span class="k9">0.00</span></p>
<p><span class="k9">0.00</span></p>
<p><span class="k9">0.00</span></p>
<p><span class="k9">0.00</span></p>
<p><span class="k9">0.00</span></p>
</div>
<div class="c r" style="left:1689px;width:51px">
<p><span class="k9">0.00</span></p>
<p><span class="k10">-110.00</span></p>
<p><span class="k2">-346.00</span></p>
<p><span class="k10">-110.00</span></p>
<p><span class="k2">-346.00</span></p>
<p><span class="k9">78.00</span></p>
<p><span class="k9">17.00</span></p>
<p><span class="k9">0.00</span></p>
<p><span class="k9">0.00</span></p>
<p><span class="k9">0.00</span></p>
<p><span class="k9">0.00</span></p>
<p><span class="k9">0.00</span></p>
<p><span class="k9">0.00</span></p>
<p><span class="k9">0.00</span></p>
<p><span class="k11">110.00</span></p>
<p><span class="k12">346.00</span></p>
<p><span class="k11">110.00</span></p>
<p><span class="k12">346.00</span></p>
<p><span class="k11">-78.00</span></p>
<p><span class="k11">-17.00</span></p>
<p><span class="k9">0.00</span></p>
<p><span class="k9">0.00</span></p>
<p><span class="k9">0.00</span></p>
<p><span class="k9">0.00</span></p>
<p><span class="k9">0.00</span></p>
<p><span class="k9">0.00</span></p>
</div>
<div class="c r" style="left:1741px;width:37px">
<p><span class="k9">0.00</span></p>
<p><span class="k9">0.00</span></p>
<p><span class="k9">0.00</span></p>
<p><span class="k9">0.00</span></p>
<p><span class="k9">0.00</span></p>
<p><span class="k9">0.00</span></p>
<p><span class="k9">0.00</span></p>
<p><span class="k9">0.00</span></p>
<p><span class="k9">0.00</span></p>
<p><span class="k9">0.00</span></p>
<p><span class="k9">0.00</span></p>
<p><span class="k9">0.00</span></p>
<p><span class="k9">0.00</span></p>
<p><span class="k9">0.00</span></p>
<p><span class="k9">0.00</span></p>
<p><span class="k9">0.00</span></p>
<p><span class="k9">0.00</span></p>
<p><span class="k9">0.00</span></p>
<p><span class="k9">0.00</span></p>
<p><span class="k9">0.00</span></p>
<p><span class="k9">0.00</span></p>
<p><span class="k9">0.00</span></p>
<p><span class="k9">0.00</span></p>
<p><span class="k9">0.00</span></p>
<p><span class="k9">0.00</span></p>
<p><span class="k9">0.00</span></p>
</div>
<div class="c r" style="left:1779px;width:37px">
<p><span class="k9">0.00</span></p>
<p><span class="k9">0.00</span></p>
<p><span class="k9">0.00</span></p>
<p><span class="k9">0.00</span></p>
<p><span class="k9">0.00</span></p>
<p><span class="k9">0.00</span></p>
<p><span class="k9">0.00</span></p>
<p><span class="k9">0.00</span></p>
<p><span class="k9">0.00</span></p>
<p><span class="k9">0.00</span></p>
<p><span class="k9">0.00</span></p>
<p><span class="k9">0.00</span></p>
<p><span class="k9">0.00</span></p>
<p><span class="k9">0.00</span></p>
<p><span class="k9">0.00</span></p>
<p><span class="k9">0.00</span></p>
<p><span class="k9">0.00</span></p>
<p><span class="k9">0.00</span></p>
<p><span class="k9">0.00</span></p>
<p><span class="k9">0.00</span></p>
<p><span class="k9">0.00</span></p>
<p><span class="k9">0.00</span></p>
<p><span class="k9">0.00</span></p>
<p><span class="k9">0.00</span></p>
<p><span class="k9">0.00</span></p>
<p><span class="k9">0.00</span></p>
</div>
<div class="c r" style="left:1817px;width:37px">
<p><span class="k9">0.00</span></p>
<p><span class="k9">0.00</span></p>
<p><span class="k9">0.00</span></p>
<p><span class="k9">0.00</span></p>
<p><span class="k9">0.00</span></p>
<p><span class="k9">0.00</span></p>
<p><span class="k9">0.00</span></p>
<p><span class="k9">0.00</span></p>
<p><span class="k9">0.00</span></p>
<p><span class="k9">0.00</span></p>
<p><span class="k9">0.00</span></p>
<p><span class="k9">0.00</span></p>
<p><span class="k9">0.00</span></p>
<p><span class="k9">0.00</span></p>
<p><span class="k9">0.00</span></p>
<p><span class="k9">0.00</span></p>
<p><span class="k9">0.00</span></p>
<p><span class="k9">0.00</span></p>
<p><span class="k9">0.00</span></p>
<p><span class="k9">0.00</span></p>
<p><span class="k9">0.00</span></p>
<p><span class="k9">0.00</span></p>
<p><span class="k9">0.00</span></p>
<p><span class="k9">0.00</span></p>
<p><span class="k9">0.00</span></p>
<p><span class="k9">0.00</span></p>
</div>
<div class="c r" style="left:1855px;width:37px">
<p><span class="k9">0.00</span></p>
<p><span class="k9">0.00</span></p>
<p><span class="k9">0.00</span></p>
<p><span class="k9">0.00</span></p>
<p><span class="k9">0.00</span></p>
<p><span class="k9">0.00</span></p>
<p><span class="k9">0.00</span></p>
<p><span class="k9">0.00</span></p>
<p><span class="k9">0.00</span></p>
<p><span class="k9">0.00</span></p>
<p><span class="k9">0.00</span></p>
<p><span class="k9">0.00</span></p>
<p><span class="k9">0.00</span></p>
<p><span class="k9">0.00</span></p>
<p><span class="k9">0.00</span></p>
<p><span class="k9">0.00</span></p>
<p><span class="k9">0.00</span></p>
<p><span class="k9">0.00</span></p>
<p><span class="k9">0.00</span></p>
<p><span class="k9">0.00</span></p>
<p><span class="k9">0.00</span></p>
<p><span class="k9">0.00</span></p>
<p><span class="k9">0.00</span></p>
<p><span class="k9">0.00</span></p>
<p><span class="k9">0.00</span></p>
<p><span class="k9">0.00</span></p>
</div>
<div class="b" style="left:25px;top:263.5px;width:1873px;height:2.5px;background:#217346;"></div>
<div class="b" style="left:23.8px;top:355px;width:1874.2px;height:2px;background:#217346;"></div>
<div class="b" style="left:26px;top:357px;width:1872px;height:1px;background:#e4e4e4;"></div>
<div class="b" style="left:23.8px;top:355px;width:2px;height:523px;background:#217346;"></div>
<div class="b" style="left:23.8px;top:876.2px;width:1874.2px;height:2px;background:#217346;"></div>
<div class="b" style="left:22.8px;top:875.5px;width:4px;height:4px;background:#217346;border:1px solid #fff;box-sizing:content-box;margin:-1px"></div>
<div class="b" style="left:25.8px;top:357px;width:1px;height:519.2px;background:#e6e6e6;"></div>
<div class="b" style="left:837px;top:203px;width:1px;height:787px;background:#9b9b9b;"></div>
<div class="b" style="left:0px;top:989.6px;width:1899px;height:1px;background:#c3c3c3;"></div>
<div class="b" style="left:1898px;top:246px;width:1px;height:744px;background:#c8c8c8;"></div>
<svg class="b" style="left:10px;top:3px;" width="16" height="16" viewBox="0 0 16 16"><path d="M0 2.2L9.6 0.5V15.5L0 13.8Z" fill="#1e7145"/><rect x="9.6" y="2.6" width="6" height="10.8" fill="#fff" stroke="#1e7145" stroke-width="0.9"/><path d="M11 4.5h3.6M11 6.4h3.6M11 8.3h3.6M11 10.2h3.6M11 12h3.6" stroke="#1e7145" stroke-width="0.8"/><path d="M12.7 3v10.5" stroke="#1e7145" stroke-width="0.6"/><path d="M2.6 4.8L6.9 11.2M6.9 4.8L2.6 11.2" stroke="#fff" stroke-width="1.5"/></svg>
<svg class="b" style="left:40px;top:4.4px;" width="14" height="14" viewBox="0 0 14 14"><path d="M0.6 0.6H13.4V13.4H0.6Z" fill="#7f3fa8" stroke="#7f3fa8" stroke-width="1.2"/><rect x="2.6" y="1" width="8.8" height="5.2" fill="#fff"/><rect x="3.4" y="9.2" width="7.2" height="4.4" fill="#fff"/><rect x="4.6" y="10.4" width="2" height="3.2" fill="#7f3fa8"/></svg>
<svg class="b" style="left:69px;top:3.5px;" width="15" height="14" viewBox="0 0 15 14"><path d="M1.2 5.2H8.6A4 4 0 0 1 8.6 13H6.6" fill="none" stroke="#2e6db4" stroke-width="1.7"/><path d="M5.6 0.8L1.2 5.2L5.6 9.6" fill="none" stroke="#2e6db4" stroke-width="1.7"/></svg>
<svg class="b" style="left:88.5px;top:9.2px;" width="6" height="4" viewBox="0 0 6 4"><path d="M0 0H6L3 3.4Z" fill="#555"/></svg>
<svg class="b" style="left:107.4px;top:3.5px;" width="15" height="14" viewBox="0 0 15 14"><path d="M13.8 5.2H6.4A4 4 0 0 0 6.4 13H8.4" fill="none" stroke="#b4b4b4" stroke-width="1.7"/><path d="M9.4 0.8L13.8 5.2L9.4 9.6" fill="none" stroke="#b4b4b4" stroke-width="1.7"/></svg>
<svg class="b" style="left:128.4px;top:9.2px;" width="6" height="4" viewBox="0 0 6 4"><path d="M0 0H6L3 3.4Z" fill="#c4c4c4"/></svg>
<svg class="b" style="left:147.2px;top:8.4px;" width="6.4" height="7" viewBox="0 0 6.4 7"><path d="M0 0.6H6.4" stroke="#555" stroke-width="1.2"/><path d="M0 3H6.4L3.2 6.6Z" fill="#555"/></svg>
<span class="t" style="left:868.1px;top:4.9px;font-size:12px;line-height:16px;color:#444;transform:scaleX(0.934);transform-origin:50% 50%;">KEFC Macro for PF1 6080 - Excel</span>
<span class="t" style="left:1784.5px;top:3.2px;font-size:12.5px;line-height:16px;color:#555;font-weight:bold;">?</span>
<svg class="b" style="left:1811px;top:6.2px;" width="13.4" height="10" viewBox="0 0 13.4 10"><rect x="0.5" y="0.5" width="12.4" height="9" fill="none" stroke="#666" stroke-width="1"/><path d="M0.5 2.4H12.9" stroke="#666" stroke-width="0.9"/><path d="M6.7 8V4.2M4.8 6L6.7 4.1L8.6 6" fill="none" stroke="#555" stroke-width="1"/></svg>
<div class="b" style="left:1842px;top:12px;width:9.2px;height:1.7px;background:#555;"></div>
<svg class="b" style="left:1870.5px;top:6.4px;" width="11" height="10" viewBox="0 0 11 10"><path d="M2.6 2.6V0.6H10.4V6.6H8.2" fill="none" stroke="#666" stroke-width="1.1"/><path d="M2.6 1.2H10.4" stroke="#666" stroke-width="1.6"/><rect x="0.6" y="3.4" width="7.6" height="6" fill="none" stroke="#666" stroke-width="1.1"/><path d="M0.6 4H8.2" stroke="#666" stroke-width="1.6"/></svg>
<svg class="b" style="left:1900px;top:6.6px;" width="10.4" height="9.2" viewBox="0 0 10.4 9.2"><path d="M0.6 0.4L9.8 8.8M9.8 0.4L0.6 8.8" stroke="#555" stroke-width="1.9"/></svg>
<div class="b" style="left:0px;top:49px;width:1920px;height:1px;background:#d4d4d4;"></div>
<div class="b" style="left:0px;top:25px;width:59.2px;height:24.7px;background:#217346;"></div>
<span class="t" style="left:19.2px;top:29.1px;font-size:12px;line-height:16px;color:#fff;transform:scaleX(0.837);transform-origin:0 50%;">FILE</span>
<div class="b" style="left:511px;top:25px;width:53.5px;height:25.2px;background:#fff;border:1px solid #d4d4d4;border-bottom:0;box-sizing:border-box"></div>
<span class="t" style="left:75.9px;top:29.1px;font-size:12px;line-height:16px;color:#444;transform:scaleX(0.978);transform-origin:0 50%;">HOME</span>
<span class="t" style="left:139.5px;top:29.1px;font-size:12px;line-height:16px;color:#444;transform:scaleX(0.856);transform-origin:0 50%;">INSERT</span>
<span class="t" style="left:204.6px;top:29.1px;font-size:12px;line-height:16px;color:#444;transform:scaleX(0.911);transform-origin:0 50%;">PAGE LAYOUT</span>
<span class="t" style="left:307.7px;top:29.1px;font-size:12px;line-height:16px;color:#444;transform:scaleX(0.928);transform-origin:0 50%;">FORMULAS</span>
<span class="t" style="left:397.9px;top:29.1px;font-size:12px;line-height:16px;color:#444;transform:scaleX(0.936);transform-origin:0 50%;">DATA</span>
<span class="t" style="left:454.8px;top:29.1px;font-size:12px;line-height:16px;color:#444;transform:scaleX(0.860);transform-origin:0 50%;">REVIEW</span>
<span class="t" style="left:523.3px;top:29.1px;font-size:12px;line-height:16px;color:#217346;transform:scaleX(0.923);transform-origin:0 50%;">VIEW</span>
<span class="t" style="left:579.7px;top:29.1px;font-size:12px;line-height:16px;color:#444;transform:scaleX(0.967);transform-origin:0 50%;">ADD-INS</span>
<span class="t" style="left:655.7px;top:29.1px;font-size:12px;line-height:16px;color:#444;transform:scaleX(0.933);transform-origin:0 50%;">ACROBAT</span>
<span class="t" style="left:736.5px;top:29.1px;font-size:12px;line-height:16px;color:#444;transform:scaleX(0.920);transform-origin:0 50%;">ANALYSIS</span>
<span class="t" style="left:817.7px;top:29.1px;font-size:12px;line-height:16px;color:#444;transform:scaleX(0.893);transform-origin:0 50%;">ANALYSIS DESIGN</span>
<span class="t" style="left:1761.8px;top:29.3px;font-size:11.5px;line-height:15px;color:#444;transform:scaleX(1.021);transform-origin:0 50%;">Namphaisong, Dara</span>
<svg class="b" style="left:1873.4px;top:35.6px;" width="5.6" height="3.4" viewBox="0 0 5.6 3.4"><path d="M0 0H5.6L2.8 3.2Z" fill="#666"/></svg>
<svg class="b" style="left:1886.2px;top:24.8px;" width="23.6" height="24.4" viewBox="0 0 23.6 24.4"><rect width="23.6" height="24.4" fill="#ababab"/><circle cx="11.8" cy="8.8" r="5.1" fill="#fff"/><path d="M3.6 24.4V19.6Q3.6 14.6 8.4 14.6L11.8 18.6L15.2 14.6Q20 14.6 20 19.6V24.4Z" fill="#fff"/></svg>
<div class="b" style="left:3px;top:205px;width:19px;height:18.6px;background:#fff;border:1px solid #7d8697;box-sizing:border-box"></div>
<span class="t" style="left:9.2px;top:207.1px;font-size:11.5px;line-height:15px;color:#444;">1</span>
<div class="b" style="left:3px;top:224.4px;width:19px;height:18.6px;background:#fff;border:1px solid #7d8697;box-sizing:border-box"></div>
<span class="t" style="left:9.2px;top:226.5px;font-size:11.5px;line-height:15px;color:#444;">2</span>
<div class="b" style="left:858px;top:205px;width:18.6px;height:18.9px;background:#fff;border:1px solid #7d8697;box-sizing:border-box"></div>
<div class="b" style="left:863.2px;top:214px;width:8.6px;height:1.5px;background:#444;"></div>
<div class="b" style="left:866.75px;top:210.5px;width:1.5px;height:8.6px;background:#444;"></div>
<div class="b" style="left:964.1px;top:205px;width:18.6px;height:18.9px;background:#fff;border:1px solid #7d8697;box-sizing:border-box"></div>
<div class="b" style="left:969.3px;top:214px;width:8.6px;height:1.5px;background:#444;"></div>
<div class="b" style="left:972.85px;top:210.5px;width:1.5px;height:8.6px;background:#444;"></div>
<div class="b" style="left:1007px;top:205px;width:18.6px;height:18.9px;background:#fff;border:1px solid #7d8697;box-sizing:border-box"></div>
<div class="b" style="left:1012.2px;top:214px;width:8.6px;height:1.5px;background:#444;"></div>
<div class="b" style="left:1015.75px;top:210.5px;width:1.5px;height:8.6px;background:#444;"></div>
<div class="b" style="left:1052px;top:205px;width:18.6px;height:18.9px;background:#fff;border:1px solid #7d8697;box-sizing:border-box"></div>
<div class="b" style="left:1057.2px;top:214px;width:8.6px;height:1.5px;background:#444;"></div>
<div class="b" style="left:1060.75px;top:210.5px;width:1.5px;height:8.6px;background:#444;"></div>
<div class="b" style="left:1902px;top:205px;width:15.4px;height:785px;background:#f1f1f1;"></div>
<div class="b" style="left:1902px;top:205.6px;width:15.2px;height:14px;background:#fff;border:1px solid #c6c6c6;box-sizing:border-box"></div>
<svg class="b" style="left:1906px;top:211px;" width="7.2" height="4" viewBox="0 0 7.2 4"><path d="M0 4H7.2L3.6 0Z" fill="#777"/></svg>
<div class="b" style="left:1902px;top:220.4px;width:15.2px;height:730.2px;background:#fff;border:1px solid #c6c6c6;box-sizing:border-box"></div>
<div class="b" style="left:1902px;top:975.4px;width:15.2px;height:14.4px;background:#fff;border:1px solid #c6c6c6;box-sizing:border-box"></div>
<svg class="b" style="left:1906px;top:981px;" width="7.2" height="4" viewBox="0 0 7.2 4"><path d="M0 0H7.2L3.6 4Z" fill="#777"/></svg>
<div class="b" style="left:0px;top:142px;width:1920px;height:1px;background:#d4d4d4;"></div>
<div class="b" style="left:204.9px;top:54.4px;width:1px;height:83px;background:#e1e1e1;"></div>
<div class="b" style="left:379.7px;top:54.4px;width:1px;height:83px;background:#e1e1e1;"></div>
<div class="b" style="left:525.7px;top:54.4px;width:1px;height:83px;background:#e1e1e1;"></div>
<div class="b" style="left:972.1px;top:54.4px;width:1px;height:83px;background:#e1e1e1;"></div>
<div class="b" style="left:1025.2px;top:54.4px;width:1px;height:68.5px;background:#e1e1e1;"></div>
<div class="b" style="left:741.9px;top:60.4px;width:1px;height:54.4px;background:#e1e1e1;"></div>
<div class="b" style="left:900.9px;top:60.4px;width:1px;height:54.4px;background:#e1e1e1;"></div>
<span class="t" style="left:57.4px;top:126.3px;font-size:12px;line-height:16px;color:#666;">Workbook Views</span>
<span class="t" style="left:277.4px;top:126.3px;font-size:12px;line-height:16px;color:#666;">Show</span>
<span class="t" style="left:438.1px;top:126.3px;font-size:12px;line-height:16px;color:#666;transform:scaleX(1.027);transform-origin:50% 50%;">Zoom</span>
<span class="t" style="left:727.7px;top:126.3px;font-size:12px;line-height:16px;color:#666;transform:scaleX(1.036);transform-origin:50% 50%;">Window</span>
<div class="b" style="left:4px;top:53px;width:45px;height:69px;background:#9fd5b7;"></div>
<svg class="b" style="left:10.9px;top:58.9px;" width="30" height="25" viewBox="0 0 30 25"><rect x="0" y="0" width="30" height="25" fill="#777"/><rect x="1.30" y="1.30" width="3.85" height="1.95" fill="#fff"/><rect x="5.96" y="1.30" width="3.85" height="1.95" fill="#fff"/><rect x="10.62" y="1.30" width="3.85" height="1.95" fill="#fff"/><rect x="15.28" y="1.30" width="3.85" height="1.95" fill="#fff"/><rect x="19.94" y="1.30" width="3.85" height="1.95" fill="#fff"/><rect x="24.60" y="1.30" width="3.85" height="1.95" fill="#fff"/><rect x="1.30" y="4.18" width="3.85" height="1.95" fill="#fff"/><rect x="5.96" y="4.18" width="3.85" height="1.95" fill="#fff"/><rect x="10.62" y="4.18" width="3.85" height="1.95" fill="#fff"/><rect x="15.28" y="4.18" width="3.85" height="1.95" fill="#fff"/><rect x="19.94" y="4.18" width="3.85" height="1.95" fill="#fff"/><rect x="24.60" y="4.18" width="3.85" height="1.95" fill="#fff"/><rect x="1.30" y="7.06" width="3.85" height="1.95" fill="#fff"/><rect x="5.96" y="7.06" width="3.85" height="1.95" fill="#fff"/><rect x="10.62" y="7.06" width="3.85" height="1.95" fill="#fff"/><rect x="15.28" y="7.06" width="3.85" height="1.95" fill="#fff"/><rect x="19.94" y="7.06" width="3.85" height="1.95" fill="#fff"/><rect x="24.60" y="7.06" width="3.85" height="1.95" fill="#fff"/><rect x="1.30" y="9.94" width="3.85" height="1.95" fill="#fff"/><rect x="5.96" y="9.94" width="3.85" height="1.95" fill="#fff"/><rect x="10.62" y="9.94" width="3.85" height="1.95" fill="#fff"/><rect x="15.28" y="9.94" width="3.85" height="1.95" fill="#fff"/><rect x="19.94" y="9.94" width="3.85" height="1.95" fill="#fff"/><rect x="24.60" y="9.94" width="3.85" height="1.95" fill="#fff"/><rect x="1.30" y="12.82" width="3.85" height="1.95" fill="#fff"/><rect x="5.96" y="12.82" width="3.85" height="1.95" fill="#fff"/><rect x="10.62" y="12.82" width="3.85" height="1.95" fill="#fff"/><rect x="15.28" y="12.82" width="3.85" height="1.95" fill="#fff"/><rect x="19.94" y="12.82" width="3.85" height="1.95" fill="#fff"/><rect x="24.60" y="12.82" width="3.85" height="1.95" fill="#fff"/><rect x="1.30" y="15.70" width="3.85" height="1.95" fill="#fff"/><rect x="5.96" y="15.70" width="3.85" height="1.95" fill="#fff"/><rect x="10.62" y="15.70" width="3.85" height="1.95" fill="#fff"/><rect x="15.28" y="15.70" width="3.85" height="1.95" fill="#fff"/><rect x="19.94" y="15.70" width="3.85" height="1.95" fill="#fff"/><rect x="24.60" y="15.70" width="3.85" height="1.95" fill="#fff"/><rect x="1.30" y="18.58" width="3.85" height="1.95" fill="#fff"/><rect x="5.96" y="18.58" width="3.85" height="1.95" fill="#fff"/><rect x="10.62" y="18.58" width="3.85" height="1.95" fill="#fff"/><rect x="15.28" y="18.58" width="3.85" height="1.95" fill="#fff"/><rect x="19.94" y="18.58" width="3.85" height="1.95" fill="#fff"/><rect x="24.60" y="18.58" width="3.85" height="1.95" fill="#fff"/><rect x="1.30" y="21.46" width="3.85" height="1.95" fill="#fff"/><rect x="5.96" y="21.46" width="3.85" height="1.95" fill="#fff"/><rect x="10.62" y="21.46" width="3.85" height="1.95" fill="#fff"/><rect x="15.28" y="21.46" width="3.85" height="1.95" fill="#fff"/><rect x="19.94" y="21.46" width="3.85" height="1.95" fill="#fff"/><rect x="24.60" y="21.46" width="3.85" height="1.95" fill="#fff"/></svg>
<span class="t" style="left:5.6px;top:90.9px;font-size:12px;line-height:16px;color:#444;transform:scaleX(1.050);transform-origin:0 50%;">Normal</span>
<svg class="b" style="left:66.1px;top:58.9px;" width="28" height="25" viewBox="0 0 28 25"><rect x="0.6" y="0.6" width="26.8" height="23.8" fill="#fff" stroke="#777" stroke-width="1.2"/><path d="M1.2 3.58H26.8" stroke="#bfd6ee" stroke-width="1.1"/><path d="M1.2 6.56H26.8" stroke="#bfd6ee" stroke-width="1.1"/><path d="M1.2 9.54H26.8" stroke="#bfd6ee" stroke-width="1.1"/><path d="M1.2 12.52H26.8" stroke="#bfd6ee" stroke-width="1.1"/><path d="M1.2 15.50H26.8" stroke="#bfd6ee" stroke-width="1.1"/><path d="M1.2 18.48H26.8" stroke="#bfd6ee" stroke-width="1.1"/><path d="M1.2 21.46H26.8" stroke="#bfd6ee" stroke-width="1.1"/><path d="M5.07 1.2V23.8" stroke="#bfd6ee" stroke-width="1.1"/><path d="M9.54 1.2V23.8" stroke="#bfd6ee" stroke-width="1.1"/><path d="M14.01 1.2V23.8" stroke="#bfd6ee" stroke-width="1.1"/><path d="M18.48 1.2V23.8" stroke="#bfd6ee" stroke-width="1.1"/><path d="M22.95 1.2V23.8" stroke="#bfd6ee" stroke-width="1.1"/><path d="M16.6 1.2V23.8" stroke="#555" stroke-width="1.1" stroke-dasharray="2 1.2"/><path d="M1.2 18.2H26.8" stroke="#555" stroke-width="1.1" stroke-dasharray="2 1.2"/></svg>
<span class="t" style="left:50.9px;top:90.9px;font-size:12px;line-height:16px;color:#444;transform:scaleX(0.931);transform-origin:0 50%;">Page Break</span>
<span class="t" style="left:59.9px;top:106.9px;font-size:12px;line-height:16px;color:#444;transform:scaleX(0.965);transform-origin:0 50%;">Preview</span>
<svg class="b" style="left:122px;top:57.9px;" width="21.2" height="28" viewBox="0 0 21.2 28"><path d="M0.6 0.6H14L20.6 7.2V27.4H0.6Z" fill="#fff" stroke="#8a8a8a" stroke-width="1.2"/><path d="M14 0.6V7.2H20.6" fill="none" stroke="#8a8a8a" stroke-width="1.1"/><rect x="3.6" y="9.6" width="14" height="14.6" fill="none" stroke="#9a9a9a" stroke-width="1"/><path d="M10.6 9.6V24.2" stroke="#9a9a9a" stroke-width="1"/><path d="M3.6 12.52H17.6" stroke="#9a9a9a" stroke-width="1"/><path d="M3.6 15.44H17.6" stroke="#9a9a9a" stroke-width="1"/><path d="M3.6 18.36H17.6" stroke="#9a9a9a" stroke-width="1"/><path d="M3.6 21.28H17.6" stroke="#9a9a9a" stroke-width="1"/></svg>
<span class="t" style="left:120.0px;top:90.9px;font-size:12px;line-height:16px;color:#444;transform:scaleX(0.949);transform-origin:0 50%;">Page</span>
<span class="t" style="left:115.0px;top:106.9px;font-size:12px;line-height:16px;color:#444;">Layout</span>
<svg class="b" style="left:163px;top:57.9px;" width="28" height="27" viewBox="0 0 28 27"><path d="M12 4.6H27V26.6H12" fill="none" stroke="#8a8a8a" stroke-width="1.1" transform="translate(0.2,-0.4)"/><rect x="5.8" y="5.6" width="17.6" height="17" fill="#fff" stroke="#777" stroke-width="1.2"/><rect x="8.4" y="7.8" width="12.4" height="2.2" fill="#b9cfea"/><path d="M5.6 1.6H23.6M5.6 0.4V2.8M23.6 0.4V2.8" stroke="#777" stroke-width="1"/><path d="M1.6 5.6V22.6M0.4 5.6H2.8M0.4 22.6H2.8" stroke="#777" stroke-width="1"/></svg>
<span class="t" style="left:156.0px;top:90.9px;font-size:12px;line-height:16px;color:#444;transform:scaleX(1.016);transform-origin:0 50%;">Custom</span>
<span class="t" style="left:162.2px;top:106.9px;font-size:12px;line-height:16px;color:#444;transform:scaleX(0.947);transform-origin:0 50%;">Views</span>
<div class="b" style="left:213px;top:65px;width:12.6px;height:12.6px;background:#fff;border:1px solid #d6d6d6;box-sizing:border-box"></div>
<svg class="b" style="left:213px;top:65px;" width="12.6" height="12.6" viewBox="0 0 12.6 12.6"><path d="M3 6.6L5.4 9.2L9.8 3.4" fill="none" stroke="#cfcfcf" stroke-width="1.3"/></svg>
<span class="t" style="left:230.5px;top:64.6px;font-size:12px;line-height:16px;color:#b0b0b0;">Ruler</span>
<div class="b" style="left:213px;top:96px;width:12.6px;height:12.6px;background:#fff;border:1px solid #ababab;box-sizing:border-box"></div>
<svg class="b" style="left:213px;top:96px;" width="12.6" height="12.6" viewBox="0 0 12.6 12.6"><path d="M3 6.6L5.4 9.2L9.8 3.4" fill="none" stroke="#6a6a6a" stroke-width="1.3"/></svg>
<span class="t" style="left:230.5px;top:95.6px;font-size:12px;line-height:16px;color:#444;transform:scaleX(0.982);transform-origin:0 50%;">Gridlines</span>
<div class="b" style="left:287.2px;top:65px;width:12.6px;height:12.6px;background:#fff;border:1px solid #ababab;box-sizing:border-box"></div>
<svg class="b" style="left:287.2px;top:65px;" width="12.6" height="12.6" viewBox="0 0 12.6 12.6"><path d="M3 6.6L5.4 9.2L9.8 3.4" fill="none" stroke="#6a6a6a" stroke-width="1.3"/></svg>
<span class="t" style="left:304.6px;top:64.6px;font-size:12px;line-height:16px;color:#444;transform:scaleX(0.983);transform-origin:0 50%;">Formula Bar</span>
<div class="b" style="left:287.2px;top:96px;width:12.6px;height:12.6px;background:#fff;border:1px solid #ababab;box-sizing:border-box"></div>
<svg class="b" style="left:287.2px;top:96px;" width="12.6" height="12.6" viewBox="0 0 12.6 12.6"><path d="M3 6.6L5.4 9.2L9.8 3.4" fill="none" stroke="#6a6a6a" stroke-width="1.3"/></svg>
<span class="t" style="left:304.6px;top:95.6px;font-size:12px;line-height:16px;color:#444;">Headings</span>
<svg class="b" style="left:391.3px;top:57.6px;" width="28.5" height="28.5" viewBox="0 0 28.5 28.5"><circle cx="10.6" cy="10.6" r="9" fill="#fff" stroke="#777" stroke-width="2.2"/><path d="M17.4 17.4L26.4 26.2" stroke="#777" stroke-width="3.6" stroke-linecap="round"/></svg>
<span class="t" style="left:389.5px;top:90.9px;font-size:12px;line-height:16px;color:#444;transform:scaleX(1.063);transform-origin:0 50%;">Zoom</span>
<svg class="b" style="left:434.8px;top:56.8px;" width="27" height="30" viewBox="0 0 27 30"><path d="M0.6 0.6H12.6L17.6 5.6V24.6H0.6Z" fill="#fff" stroke="#8a8a8a" stroke-width="1.1"/><path d="M12.6 0.6V5.6H17.6" fill="none" stroke="#8a8a8a" stroke-width="1"/><path d="M17.6 0.6H26.2V18" fill="none" stroke="#8a8a8a" stroke-width="1" stroke-dasharray="1.4 1.4"/><path d="M16 13H25M21.4 9.2L25.2 13L21.4 16.8" fill="none" stroke="#3e7cc0" stroke-width="1.7"/><rect x="13.6" y="21.2" width="13.2" height="8.6" fill="#3e7cc0"/></svg>
<span class="t" style="left:449.5px;top:77.9px;font-size:6.6px;line-height:9px;color:#fff;font-weight:bold;transform:scaleX(0.963);transform-origin:50% 50%;">100</span>
<span class="t" style="left:433.9px;top:90.9px;font-size:12px;line-height:16px;color:#444;transform:scaleX(0.932);transform-origin:0 50%;">100%</span>
<svg class="b" style="left:480.6px;top:59.4px;" width="31" height="27" viewBox="0 0 31 27"><rect x="0.6" y="0.6" width="25" height="21.6" fill="#fff" stroke="#9a9a9a" stroke-width="1.1"/><path d="M0.6 6.00H25.6" stroke="#9a9a9a" stroke-width="1"/><path d="M0.6 11.40H25.6" stroke="#9a9a9a" stroke-width="1"/><path d="M0.6 16.80H25.6" stroke="#9a9a9a" stroke-width="1"/><path d="M6.85 0.6V22.2" stroke="#9a9a9a" stroke-width="1"/><path d="M13.10 0.6V22.2" stroke="#9a9a9a" stroke-width="1"/><path d="M19.35 0.6V22.2" stroke="#9a9a9a" stroke-width="1"/><circle cx="16.4" cy="12" r="7.6" fill="#fff" stroke="#777" stroke-width="2"/><path d="M11.2 14.6A5.4 5.4 0 0 1 21.6 14.6Z" fill="#bcd2ee"/><path d="M22 17.8L29.6 25.4" stroke="#777" stroke-width="3.4" stroke-linecap="round"/></svg>
<span class="t" style="left:471.5px;top:90.9px;font-size:12px;line-height:16px;color:#444;transform:scaleX(1.068);transform-origin:0 50%;">Zoom to</span>
<span class="t" style="left:470.8px;top:106.9px;font-size:12px;line-height:16px;color:#444;transform:scaleX(0.976);transform-origin:0 50%;">Selection</span>
<svg class="b" style="left:541.1px;top:57.1px;" width="27" height="31" viewBox="0 0 27 31"><rect x="9.85" y="0.55" width="15.3" height="12.2" fill="#fff" stroke="#8a8a8a" stroke-width="1.1"/><rect x="9.3" y="0" width="16.4" height="3.2" fill="#6e6e6e"/><rect x="0.55" y="6.85" width="15.6" height="12.3" fill="#fff" stroke="#8a8a8a" stroke-width="1.1"/><rect x="0" y="6.3" width="16.7" height="3.2" fill="#6e6e6e"/><rect x="10.85" y="17.45" width="15.2" height="12.6" fill="#fff" stroke="#8a8a8a" stroke-width="1.1"/><rect x="10.3" y="16.9" width="16.3" height="3.2" fill="#3e7cc0"/></svg>
<span class="t" style="left:542.9px;top:90.9px;font-size:12px;line-height:16px;color:#444;transform:scaleX(1.025);transform-origin:0 50%;">New</span>
<span class="t" style="left:532.9px;top:106.9px;font-size:12px;line-height:16px;color:#444;transform:scaleX(1.043);transform-origin:0 50%;">Window</span>
<svg class="b" style="left:591.1px;top:57.1px;" width="24" height="29" viewBox="0 0 24 29"><rect x="0.55" y="0.55" width="22.8" height="13.3" fill="#fff" stroke="#8a8a8a" stroke-width="1.1"/><rect x="0" y="0" width="23.9" height="3.8" fill="#3e7cc0"/><rect x="0.55" y="14.45" width="22.8" height="13.7" fill="#fff" stroke="#8a8a8a" stroke-width="1.1"/><rect x="0" y="13.9" width="23.9" height="3.8" fill="#3e7cc0"/></svg>
<span class="t" style="left:581.6px;top:90.9px;font-size:12px;line-height:16px;color:#444;">Arrange</span>
<span class="t" style="left:595.3px;top:106.9px;font-size:12px;line-height:16px;color:#444;transform:scaleX(1.140);transform-origin:0 50%;">All</span>
<svg class="b" style="left:634.9px;top:58.9px;" width="28" height="24" viewBox="0 0 28 24"><path d="M0.6 0.6H27.4V20.6H19L17 23.2H10.6L9.6 21.6L8 23.2H0.6Z" fill="#fff" stroke="#8a8a8a" stroke-width="1.1"/><path d="M0.6 5.70H27.4" stroke="#9a9a9a" stroke-width="1"/><path d="M0.6 10.80H27.4" stroke="#9a9a9a" stroke-width="1"/><path d="M0.6 15.90H27.4" stroke="#9a9a9a" stroke-width="1"/><path d="M9.60 0.6V21" stroke="#9a9a9a" stroke-width="1"/><path d="M18.60 0.6V21" stroke="#9a9a9a" stroke-width="1"/><path d="M1.2 5L9.4 1.2M1.2 10.2L9.4 6.4M1.2 15.4L9.4 11.6M1.2 20.4L9.4 16.6M10 5L18.4 1.2M19 5L27 1.2" stroke="#8db8e6" stroke-width="1"/><rect x="10.2" y="6.4" width="8" height="3.6" fill="#3e7cc0"/></svg>
<span class="t" style="left:631.8px;top:90.9px;font-size:12px;line-height:16px;color:#444;transform:scaleX(0.908);transform-origin:0 50%;">Freeze</span>
<span class="t" style="left:628.9px;top:106.9px;font-size:12px;line-height:16px;color:#444;transform:scaleX(0.917);transform-origin:0 50%;">Panes</span>
<svg class="b" style="left:662.8px;top:113.6px;" width="5.6" height="3.4" viewBox="0 0 5.6 3.4"><path d="M0 0H5.6L2.8 3.2Z" fill="#555"/></svg>
<svg class="b" style="left:673.8px;top:57.9px;" width="15.4" height="12" viewBox="0 0 15.4 12"><rect x="0.55" y="0.55" width="14.1" height="10.8" fill="#fff" stroke="#777" stroke-width="1.1"/><rect x="0" y="0" width="15.2" height="2.4" fill="#3e7cc0"/><path d="M1.6 6.8H13.8" stroke="#3e7cc0" stroke-width="1" stroke-dasharray="1 1"/></svg>
<span class="t" style="left:692.6px;top:56.9px;font-size:12px;line-height:16px;color:#444;">Split</span>
<svg class="b" style="left:673.8px;top:80px;" width="15.4" height="14" viewBox="0 0 15.4 14"><rect x="0.55" y="0.55" width="14.1" height="12.8" fill="#fff" stroke="#777" stroke-width="1" stroke-dasharray="1 1.1"/><rect x="0" y="0" width="15.2" height="2.4" fill="#3e7cc0"/></svg>
<span class="t" style="left:692.6px;top:79.7px;font-size:12px;line-height:16px;color:#444;transform:scaleX(1.049);transform-origin:0 50%;">Hide</span>
<svg class="b" style="left:673.8px;top:103.2px;" width="15.4" height="14" viewBox="0 0 15.4 14"><rect x="0.55" y="0.55" width="14.1" height="12.3" fill="#fff" stroke="#c2c2c2" stroke-width="1.1"/><rect x="0" y="0" width="15.2" height="2.4" fill="#b0b0b0"/></svg>
<span class="t" style="left:692.6px;top:102.6px;font-size:12px;line-height:16px;color:#b0b0b0;transform:scaleX(1.020);transform-origin:0 50%;">Unhide</span>
<svg class="b" style="left:749.8px;top:57.9px;" width="16" height="11.2" viewBox="0 0 16 11.2"><path d="M0.6 0.6H4.6L7 3.2V10.6H0.6Z" fill="#f6f2f6" stroke="#c4bcc4" stroke-width="1"/><path d="M4.6 0.6V3.2H7" fill="none" stroke="#c4bcc4" stroke-width="0.9"/><path d="M9 0.6H13L15.4 3.2V10.6H9Z" fill="#f6f2f6" stroke="#c4bcc4" stroke-width="1"/><path d="M13 0.6V3.2H15.4" fill="none" stroke="#c4bcc4" stroke-width="0.9"/></svg>
<span class="t" style="left:769.2px;top:56.9px;font-size:12px;line-height:16px;color:#b0b0b0;transform:scaleX(0.948);transform-origin:0 50%;">View Side by Side</span>
<svg class="b" style="left:749.8px;top:79.4px;" width="16" height="15.4" viewBox="0 0 16 15.4"><g transform="translate(0,2)"><path d="M0.6 0.6H4.6L7 3.2V10.6H0.6Z" fill="#f6f2f6" stroke="#c4bcc4" stroke-width="1"/><path d="M4.6 0.6V3.2H7" fill="none" stroke="#c4bcc4" stroke-width="0.9"/><path d="M7.2 0.6H11.2L13.6 3.2V10.6H7.2Z" fill="#f6f2f6" stroke="#c4bcc4" stroke-width="1"/><path d="M11.2 0.6V3.2H13.6" fill="none" stroke="#c4bcc4" stroke-width="0.9"/></g><path d="M14.6 0.8V14.6M13.2 2.4L14.6 0.6L16 2.4M13.2 13L14.6 14.8L16 13" fill="none" stroke="#c4bcc4" stroke-width="0.9"/><path d="M2 6H4M2 8.4H4M2 10.6H4M8.6 6.4H11.6M8.6 8.6H11.6M8.6 10.8H11.6" stroke="#c4bcc4" stroke-width="0.8"/></svg>
<span class="t" style="left:769.2px;top:79.7px;font-size:12px;line-height:16px;color:#b0b0b0;">Synchronous Scrolling</span>
<svg class="b" style="left:749.8px;top:104.8px;" width="16" height="11.2" viewBox="0 0 16 11.2"><path d="M0.6 0.6H4.6L7 3.2V10.6H0.6Z" fill="#f6f2f6" stroke="#c4bcc4" stroke-width="1"/><path d="M4.6 0.6V3.2H7" fill="none" stroke="#c4bcc4" stroke-width="0.9"/><path d="M9 0.6H13L15.4 3.2V10.6H9Z" fill="#f6f2f6" stroke="#c4bcc4" stroke-width="1"/><path d="M13 0.6V3.2H15.4" fill="none" stroke="#c4bcc4" stroke-width="0.9"/><path d="M1.8 6.8H5.4M4 5.2L5.6 6.8L4 8.4M14 6.8H10.4M11.8 5.2L10.2 6.8L11.8 8.4" fill="none" stroke="#b0a8b0" stroke-width="0.9"/></svg>
<span class="t" style="left:769.2px;top:102.6px;font-size:12px;line-height:16px;color:#b0b0b0;transform:scaleX(0.979);transform-origin:0 50%;">Reset Window Position</span>
<svg class="b" style="left:921.9px;top:58px;" width="29.2" height="25" viewBox="0 0 29.2 25"><rect x="0.55" y="0.55" width="11.5" height="9.3" fill="#fff" stroke="#8a8a8a" stroke-width="1.1"/><rect x="0" y="0" width="12.6" height="2.8" fill="#6e6e6e"/><rect x="15.15" y="0.55" width="13.3" height="9.3" fill="#fff" stroke="#8a8a8a" stroke-width="1.1"/><rect x="14.6" y="0" width="14.4" height="2.8" fill="#6e6e6e"/><rect x="0.55" y="13.15" width="11.7" height="11.3" fill="#fff" stroke="#8a8a8a" stroke-width="1.1"/><rect x="0" y="12.6" width="12.8" height="2.8" fill="#6e6e6e"/><rect x="11.15" y="8.95" width="12.3" height="10.3" fill="#fff" stroke="#8a8a8a" stroke-width="1.1"/><rect x="10.6" y="8.4" width="13.4" height="2.6" fill="#3e7cc0"/></svg>
<span class="t" style="left:918.4px;top:90.9px;font-size:12px;line-height:16px;color:#444;">Switch</span>
<span class="t" style="left:907.8px;top:106.9px;font-size:12px;line-height:16px;color:#444;transform:scaleX(1.019);transform-origin:0 50%;">Windows</span>
<svg class="b" style="left:960px;top:113.6px;" width="5.6" height="3.4" viewBox="0 0 5.6 3.4"><path d="M0 0H5.6L2.8 3.2Z" fill="#555"/></svg>
<div class="b" style="left:977.1px;top:53px;width:43.8px;height:69.6px;background:#9fd5b7;"></div>
<svg class="b" style="left:984.3px;top:58px;" width="31" height="28.5" viewBox="0 0 31 28.5"><rect x="0.55" y="0.55" width="23.6" height="21" fill="#fff" stroke="#8a8a8a" stroke-width="1.1"/><rect x="0" y="0" width="24.7" height="4.2" fill="#6e6e6e"/><rect x="2.8" y="6.8" width="5" height="1.1" fill="#b5b5b5"/><rect x="9.8" y="6.8" width="5" height="1.1" fill="#b5b5b5"/><rect x="16.8" y="6.8" width="5" height="1.1" fill="#b5b5b5"/><rect x="2.8" y="10.6" width="5" height="1.1" fill="#b5b5b5"/><rect x="9.8" y="10.6" width="5" height="1.1" fill="#b5b5b5"/><rect x="16.8" y="10.6" width="5" height="1.1" fill="#b5b5b5"/><rect x="2.8" y="14.4" width="5" height="1.1" fill="#b5b5b5"/><rect x="9.8" y="14.4" width="5" height="1.1" fill="#b5b5b5"/><rect x="16.8" y="14.4" width="5" height="1.1" fill="#b5b5b5"/><rect x="2.8" y="18.2" width="5" height="1.1" fill="#b5b5b5"/><rect x="9.8" y="18.2" width="5" height="1.1" fill="#b5b5b5"/><rect x="16.8" y="18.2" width="5" height="1.1" fill="#b5b5b5"/><path d="M17.6 14.6H28.6Q30.6 14.6 30.6 16.8H28.4V25.4Q28.4 28 25.6 28H16Q15.2 26 16.4 24.6H18.4V16Q18.4 14.6 17.6 14.6Z" fill="#f0893a"/><rect x="20" y="16.2" width="6.8" height="8.6" fill="#fff"/></svg>
<span class="t" style="left:978.8px;top:90.9px;font-size:12px;line-height:16px;color:#444;">Macros</span>
<svg class="b" style="left:995.7px;top:113.2px;" width="5.6" height="3.4" viewBox="0 0 5.6 3.4"><path d="M0 0H5.6L2.8 3.2Z" fill="#333"/></svg>
<svg class="b" style="left:1899.8px;top:130.2px;" width="11.4" height="7.4" viewBox="0 0 11.4 7.4"><path d="M0 3.7H5.4" stroke="#555" stroke-width="1.1"/><path d="M5.2 1.4H8.2L9.2 0.4H10.6V7H9.2L8.2 6H5.2Z" fill="#555"/></svg>
<div class="b" style="left:977px;top:122.2px;width:180.8px;height:77.4px;background:#fff;border:1px solid #c6c6c6;box-sizing:border-box;box-shadow:1.5px 1.5px 3px rgba(0,0,0,0.25)"></div>
<div class="b" style="left:979.3px;top:124.4px;width:176.4px;height:23.3px;background:#d3f0e0;"></div>
<div class="b" style="left:1011.2px;top:172px;width:144.2px;height:1px;background:#e1e1e1;"></div>
<span class="t" style="left:1009.6px;top:128.4px;font-size:12px;line-height:16px;color:#444;transform:scaleX(0.981);transform-origin:0 50%;"><u>V</u>iew Macros</span>
<span class="t" style="left:1009.6px;top:152.2px;font-size:12px;line-height:16px;color:#444;transform:scaleX(0.975);transform-origin:0 50%;"><u>R</u>ecord Macro...</span>
<span class="t" style="left:1009.6px;top:178.5px;font-size:12px;line-height:16px;color:#444;transform:scaleX(0.933);transform-origin:0 50%;"><u>U</u>se Relative References</span>
<svg class="b" style="left:983.6px;top:127.9px;" width="16" height="16" viewBox="0 0 16 16"><rect x="0.5" y="0.5" width="9.6" height="9" fill="#fff" stroke="#8a8a8a" stroke-width="1"/><rect x="0" y="0" width="10.6" height="2" fill="#6e6e6e"/><path d="M2 4.4H4.6M6 4.4H8.6M2 6.8H4.6" stroke="#b5b5b5" stroke-width="0.9"/><path d="M6.6 6H14.6Q16 6 16 7.6H14.4V13.6Q14.4 15.6 12.6 15.6H5.2Q4.6 14.2 5.6 13.4H7.2V7Q7.2 6 6.6 6Z" fill="#ec7a25"/><rect x="8.6" y="7.4" width="4.4" height="5.6" fill="#fff"/></svg>
<svg class="b" style="left:983.2px;top:152.4px;" width="16" height="15" viewBox="0 0 16 15"><rect x="1.4" y="1.6" width="13.4" height="12.6" fill="#fff" stroke="#7a7a7a" stroke-width="1"/><rect x="8.4" y="1.1" width="6.9" height="2.2" fill="#6e6e6e"/><path d="M3.4 8.2H6M7.2 8.2H9.6M10.8 8.2H13.2M3.4 11H6M7.2 11H9.6M10.8 11H13.2M10.8 5.4H13.2" stroke="#b0b0b0" stroke-width="0.9"/><circle cx="4.3" cy="4.3" r="4.5" fill="#d8533a"/></svg>
<svg class="b" style="left:983.4px;top:178.4px;" width="15.4" height="15.4" viewBox="0 0 15.4 15.4"><rect x="0.5" y="0.5" width="14.4" height="14.4" fill="#fff" stroke="#6a6a6a" stroke-width="1"/><path d="M0.5 3.9H14.9M0.5 11.5H14.9M3.4 0.5V14.9M11.5 0.5V14.9" stroke="#7a7a7a" stroke-width="0.9"/><rect x="3.9" y="12" width="3.2" height="2.6" fill="#d8533a"/><rect x="12" y="12" width="2.7" height="2.6" fill="#d8533a"/><path d="M6 9.6Q8.4 5 12.2 9.2" fill="none" stroke="#2e6db4" stroke-width="1.3"/><path d="M4.6 6.6V10.4H8.4Z" fill="#2e6db4"/></svg>
<div class="b" style="left:0px;top:990.4px;width:1920px;height:28px;background:#f5f5f5;"></div>
<div class="b" style="left:0px;top:989.8px;width:1899px;height:1px;background:#c6c6c6;"></div>
<svg class="b" style="left:26.6px;top:999.6px;" width="5" height="8.4" viewBox="0 0 5 8.4"><path d="M5 0V8.4L0 4.2Z" fill="#c6c6c6"/></svg>
<svg class="b" style="left:55.2px;top:999.6px;" width="5" height="8.4" viewBox="0 0 5 8.4"><path d="M0 0V8.4L5 4.2Z" fill="#c6c6c6"/></svg>
<div class="b" style="left:100px;top:994.6px;width:1px;height:19px;background:#c6c6c6;"></div>
<span class="t" style="left:111.8px;top:995.5px;font-size:13px;line-height:17px;color:#444;transform:scaleX(0.973);transform-origin:0 50%;">Readme</span>
<div class="b" style="left:172.8px;top:989.6px;width:164.4px;height:26.4px;background:#fff;border-left:1px solid #c6c6c6;border-right:1px solid #c6c6c6;box-sizing:border-box"></div>
<div class="b" style="left:172.8px;top:1013.4px;width:164.4px;height:2px;background:#217346;"></div>
<span class="t" style="left:184.8px;top:995.5px;font-size:13px;line-height:17px;color:#217346;font-weight:bold;transform:scaleX(0.986);transform-origin:0 50%;">KEFC uploading layout</span>
<svg class="b" style="left:369.4px;top:996.1px;" width="16.6" height="16.6" viewBox="0 0 16.6 16.6"><circle cx="8.3" cy="8.3" r="7.6" fill="none" stroke="#c2c2c2" stroke-width="1.1"/><path d="M4.4 8.3H12.2M8.3 4.4V12.2" stroke="#c2c2c2" stroke-width="1.4"/></svg>
<div class="b" style="left:1152.6px;top:1000.2px;width:1.6px;height:1.6px;background:#9a9a9a;"></div>
<div class="b" style="left:1152.6px;top:1004.2px;width:1.6px;height:1.6px;background:#9a9a9a;"></div>
<div class="b" style="left:1152.6px;top:1008.2px;width:1.6px;height:1.6px;background:#9a9a9a;"></div>
<div class="b" style="left:1169.2px;top:997.6px;width:728px;height:14.6px;background:#e9e9e9;"></div>
<div class="b" style="left:1169.2px;top:997.6px;width:15px;height:14.6px;background:#fff;border:1px solid #c6c6c6;box-sizing:border-box"></div>
<svg class="b" style="left:1174.4px;top:1001.3px;" width="4.4" height="7.2" viewBox="0 0 4.4 7.2"><path d="M4.4 0V7.2L0 3.6Z" fill="#555"/></svg>
<div class="b" style="left:1882px;top:997.6px;width:15px;height:14.6px;background:#fff;border:1px solid #c6c6c6;box-sizing:border-box"></div>
<svg class="b" style="left:1887.6px;top:1001.3px;" width="4.4" height="7.2" viewBox="0 0 4.4 7.2"><path d="M0 0V7.2L4.4 3.6Z" fill="#555"/></svg>
<div class="b" style="left:1289.8px;top:997.6px;width:81px;height:14.6px;background:#fff;border:1px solid #c6c6c6;box-sizing:border-box"></div>
<div class="b" style="left:0px;top:1018.4px;width:1920px;height:21.8px;background:#217346;"></div>
<span class="t" style="left:7.8px;top:1021.3px;font-size:11.8px;line-height:15px;color:#fff;transform:scaleX(0.836);transform-origin:0 50%;">READY</span>
<span class="t" style="left:1318.6px;top:1021.3px;font-size:11.8px;line-height:15px;color:#fff;transform:scaleX(0.894);transform-origin:0 50%;">AVERAGE: 9.88547486</span>
<span class="t" style="left:1451.0px;top:1021.3px;font-size:11.8px;line-height:15px;color:#fff;transform:scaleX(0.931);transform-origin:0 50%;">COUNT: 5888</span>
<span class="t" style="left:1534.8px;top:1021.3px;font-size:11.8px;line-height:15px;color:#fff;transform:scaleX(0.921);transform-origin:0 50%;">SUM: 46007</span>
<div class="b" style="left:1628px;top:1018.4px;width:38px;height:21.8px;background:#186338;"></div>
<svg class="b" style="left:1640px;top:1022px;" width="13.2" height="12.8" viewBox="0 0 13.2 12.8"><rect x="0.6" y="0.6" width="12" height="11.6" fill="none" stroke="#fff" stroke-width="1.2"/><path d="M4.6 0.6V12.2M8.6 0.6V12.2M0.6 4.5H12.6M0.6 8.4H12.6" stroke="#fff" stroke-width="1.2"/></svg>
<svg class="b" style="left:1678px;top:1022px;" width="14" height="12.8" viewBox="0 0 14 12.8"><rect x="0.6" y="0.6" width="12.8" height="11.6" fill="none" stroke="#fff" stroke-width="1.1"/><rect x="3.4" y="2.8" width="7.2" height="7.4" fill="none" stroke="#fff" stroke-width="1"/><path d="M5 5H9M5 6.6H9M5 8.2H9" stroke="#fff" stroke-width="0.8"/></svg>
<svg class="b" style="left:1716.2px;top:1022px;" width="14" height="12.8" viewBox="0 0 14 12.8"><rect x="0.6" y="0.6" width="12.8" height="11.6" fill="none" stroke="#fff" stroke-width="1.1"/><path d="M1 0.6H9V7.6H1Z" fill="#fff"/><path d="M3.8 0.6V6" stroke="#217346" stroke-width="0.8"/><path d="M6.2 0.6V6" stroke="#217346" stroke-width="0.8"/></svg>
<div class="b" style="left:1747.2px;top:1027.9px;width:6.2px;height:2.5px;background:#fff;"></div>
<div class="b" style="left:1757.2px;top:1028.4px;width:100px;height:1.6px;background:#fff;"></div>
<div class="b" style="left:1805px;top:1022.8px;width:4.2px;height:11.2px;background:#fff;"></div>
<div class="b" style="left:1861px;top:1028px;width:8.4px;height:2.3px;background:#fff;"></div>
<div class="b" style="left:1864.05px;top:1025px;width:2.3px;height:8.4px;background:#fff;"></div>
<span class="t" style="left:1885.4px;top:1021.1px;font-size:11.8px;line-height:15px;color:#fff;transform:scaleX(0.895);transform-origin:0 50%;">100%</span>
<div class="b" style="left:0px;top:1040.2px;width:1920px;height:41px;background:linear-gradient(90deg,#22363f 0%,#243a43 30%,#22343f 45%,#1f2d42 65%,#1b2645 100%);"></div>
<svg class="b" style="left:15.7px;top:1052px;" width="16.6" height="16.6" viewBox="0 0 16.6 16.6"><path d="M0 2.3L6.8 1.4V7.9H0ZM7.6 1.3L16.6 0V7.9H7.6ZM0 8.7H6.8V15.2L0 14.3ZM7.6 8.7H16.6V16.6L7.6 15.3Z" fill="#fff"/></svg>
<div class="b" style="left:48px;top:1040.6px;width:288px;height:41px;background:#f2f2f2;"></div>
<svg class="b" style="left:59.6px;top:1048.6px;" width="18" height="18" viewBox="0 0 18 18"><circle cx="11.4" cy="6.6" r="5.2" fill="none" stroke="#222" stroke-width="1.3"/><path d="M7.8 10.4L0.8 17.2" stroke="#222" stroke-width="1.4"/></svg>
<span class="t" style="left:88.4px;top:1050.6px;font-size:15px;line-height:20px;color:#3a3a3a;transform:scaleX(0.965);transform-origin:0 50%;">Type here to search</span>
<svg class="b" style="left:351.4px;top:1052.2px;" width="16.4" height="15.6" viewBox="0 0 16.4 15.6"><rect x="0.8" y="4.2" width="10.4" height="7.4" fill="none" stroke="#fff" stroke-width="1.3"/><path d="M0.7 2.8V0.7H11.3V2.8M0.7 13V14.9H11.3V13" fill="none" stroke="#fff" stroke-width="1.3"/><path d="M15 0V3.4M15 8.6V15.6" stroke="#fff" stroke-width="1.5"/><rect x="13.8" y="4.2" width="2.6" height="3" fill="#fff"/></svg>
<svg class="b" style="left:398.8px;top:1047.8px;" width="24" height="24" viewBox="0 0 24 24"><defs><linearGradient id="eg1" x1="0" y1="0" x2="1" y2="1"><stop offset="0" stop-color="#35c1f1"/><stop offset="0.5" stop-color="#2b8fd9"/><stop offset="1" stop-color="#1b5fae"/></linearGradient><linearGradient id="eg2" x1="0" y1="0" x2="1" y2="0"><stop offset="0" stop-color="#2fb6e8"/><stop offset="1" stop-color="#6ad35a"/></linearGradient></defs><circle cx="12" cy="12" r="12" fill="url(#eg1)"/><path d="M1.2 8.6A12 12 0 0 1 24 11.4Q24 17 18 17Q13.6 17 14.8 13.6Q15.2 10 11.4 9.2Q5 8.4 1.2 13Z" fill="url(#eg2)"/><path d="M9.4 21.6A7.6 7.6 0 0 1 8.2 10.8Q5.6 13 6.2 17Q7 20.4 9.4 21.6Z" fill="#154f96"/><path d="M12.4 12.6Q11.8 17.6 17 17.6Q21 17.4 22.6 15.6Q21 17 18 17Q13.6 17 14.8 13.6Q14.6 11.4 13.2 11.2Q12.6 11.6 12.4 12.6Z" fill="#22363f"/></svg>
<svg class="b" style="left:448.6px;top:1048.6px;" width="26" height="27" viewBox="0 0 26 27"><circle cx="12" cy="12" r="12" fill="#fff"/><path d="M12 12L1.6 6A12 12 0 0 1 22.4 6Z" fill="#e33b2e"/><path d="M12 12L22.4 6A12 12 0 0 1 12 24Z" fill="#fcc934"/><path d="M12 12L12 24A12 12 0 0 1 1.6 6Z" fill="#2da94f"/><circle cx="12" cy="12" r="5.6" fill="#fff"/><circle cx="12" cy="12" r="4.4" fill="#4a8af4"/><circle cx="18.2" cy="19.4" r="7" fill="#d9dde6"/><circle cx="18.2" cy="16.4" r="2.3" fill="#6b5a50"/><path d="M13.4 24.4Q13.6 19.6 18.2 19.6Q22.8 19.6 23 24.4Q18.2 27.6 13.4 24.4Z" fill="#2b2f3a"/></svg>
<svg class="b" style="left:498.6px;top:1050px;" width="22" height="19" viewBox="0 0 22 19"><path d="M0 2.4Q0 1.4 1 1.4H8L10 3.6H21Q22 3.6 22 4.6V6H0Z" fill="#f5b93c"/><rect x="0" y="4.8" width="22" height="13.6" rx="0.8" fill="#fbd667"/><path d="M4.4 18.4V11.4H17.6V18.4H14.4V14.6H7.6V18.4Z" fill="#3a8ee6"/><path d="M0 17H22V18.4H0Z" fill="#e9a92c"/></svg>
<svg class="b" style="left:546.4px;top:1048px;" width="24" height="24" viewBox="0 0 24 24"><rect width="24" height="24" rx="2.4" fill="#1b6f9e"/><path d="M0 12L24 0V24H0Z" fill="#17608c" opacity="0.6"/><rect x="4.4" y="6.4" width="15.2" height="9.6" fill="#8fbdd6"/><rect x="10.2" y="16" width="3.6" height="2" fill="#dbe9f1"/><rect x="7.4" y="17.8" width="9.2" height="1.3" fill="#dbe9f1"/><rect x="10.2" y="9.6" width="3.6" height="3.4" fill="#1b6f9e"/><path d="M10.8 9.8V8.8A1.2 1.2 0 0 1 13.2 8.8V9.8" fill="none" stroke="#1b6f9e" stroke-width="0.8"/></svg>
<svg class="b" style="left:594.8px;top:1050.6px;" width="24" height="18" viewBox="0 0 24 18"><path d="M2.3 4.3H23.4L14 15.4H1.9Z" fill="#3f79b9"/><path d="M0 7.3H16.3L13 11.8H0Z" fill="#1f3140"/><path d="M0.2 7.7H15.4L12.7 11.4H0.2Z" fill="#f9b90b"/></svg>
<div class="b" style="left:632px;top:1040.2px;width:45px;height:41px;background:rgba(255,255,255,0.2);"></div>
<div class="b" style="left:677.4px;top:1040.2px;width:1.2px;height:40px;background:rgba(255,255,255,0.12);"></div>
<svg class="b" style="left:644.4px;top:1047.8px;" width="23" height="24" viewBox="0 0 23 24"><path d="M0 2.8L13.6 0V24L0 21.2Z" fill="#1e7145"/><rect x="13.6" y="3.4" width="8.6" height="17.2" fill="#fff" stroke="#1e7145" stroke-width="1"/><path d="M15.4 6.4H20.4M15.4 9.2H20.4M15.4 12H20.4M15.4 14.8H20.4M15.4 17.6H20.4" stroke="#1e7145" stroke-width="1.1"/><path d="M17.9 4V20" stroke="#1e7145" stroke-width="0.8"/><path d="M3.8 7.4L10 16.8M10 7.4L3.8 16.8" stroke="#fff" stroke-width="2.1"/></svg>
<svg class="b" style="left:693.4px;top:1047.8px;" width="23" height="24" viewBox="0 0 23 24"><path d="M0 2.8L13.6 0V24L0 21.2Z" fill="#2b579a"/><rect x="13.6" y="3.4" width="8.6" height="17.2" fill="#fff" stroke="#2b579a" stroke-width="1"/><path d="M15.2 6H20.6M15.2 8.2H20.6M15.2 10.4H20.6M15.2 12.6H20.6M15.2 14.8H20.6M15.2 17H20.6" stroke="#2b579a" stroke-width="1"/><path d="M2.6 8L4.6 16.4L6.8 9.6L9 16.4L11 8" fill="none" stroke="#fff" stroke-width="1.6"/></svg>
<svg class="b" style="left:741.4px;top:1048.2px;" width="25" height="23" viewBox="0 0 25 23"><ellipse cx="11.6" cy="9.6" rx="11.2" ry="7.6" fill="#fff" stroke="#d73a3a" stroke-width="1.5" transform="rotate(-18 11.6 9.6)"/><path d="M1 13.4Q3.4 18.4 11 17.4L12.6 14.6Z" fill="#8d8d8d"/><path d="M9.6 4.6L15 15.4M15.6 3.6L12.6 15.6" stroke="#9a9a9a" stroke-width="1"/><circle cx="16.4" cy="18.8" r="2.5" fill="none" stroke="#2f8fd8" stroke-width="1.5"/><circle cx="20.8" cy="14.6" r="2.5" fill="none" stroke="#2f8fd8" stroke-width="1.5"/></svg>
<div class="b" style="left:440.2px;top:1078px;width:39.7px;height:3px;background:#76b9ed;"></div>
<div class="b" style="left:488.6px;top:1078px;width:40px;height:3px;background:#76b9ed;"></div>
<div class="b" style="left:586.9px;top:1078px;width:39.7px;height:3px;background:#76b9ed;"></div>
<div class="b" style="left:632px;top:1078px;width:47.7px;height:3px;background:#76b9ed;"></div>
<div class="b" style="left:684.8px;top:1078px;width:39.5px;height:3px;background:#76b9ed;"></div>
<div class="b" style="left:734px;top:1078px;width:39.8px;height:3px;background:#76b9ed;"></div>
<svg class="b" style="left:1676.6px;top:1057px;" width="12.8" height="7" viewBox="0 0 12.8 7"><path d="M0.6 6.6L6.4 0.9L12.2 6.6" fill="none" stroke="#fff" stroke-width="1.3"/></svg>
<svg class="b" style="left:1698.6px;top:1054.6px;" width="17" height="12.6" viewBox="0 0 17 12.6"><rect x="4.4" y="3.4" width="10.6" height="6.6" fill="none" stroke="#fff" stroke-width="1.2"/><rect x="15.2" y="5.2" width="1.4" height="3" fill="#fff"/><rect x="5.6" y="4.6" width="8.2" height="4.2" fill="#fff"/><path d="M2.6 0V3M5 0V3" stroke="#fff" stroke-width="1"/><path d="M1.4 3H6.2V5.6Q6.2 7.4 3.8 7.4Q1.4 7.4 1.4 5.6Z" fill="#1f2e42" stroke="#fff" stroke-width="1"/><path d="M3.8 7.4V12.4" stroke="#fff" stroke-width="1"/></svg>
<svg class="b" style="left:1725.2px;top:1053.6px;" width="14" height="14" viewBox="0 0 14 14"><circle cx="11.4" cy="11.6" r="1.5" fill="#fff"/><path d="M6.6 12.8A5.2 5.2 0 0 1 12.6 6.8M3.4 12.8A8.4 8.4 0 0 1 12.6 3.6M0.4 12.8A11.4 11.4 0 0 1 12.6 0.6" fill="none" stroke="#fff" stroke-width="1.1"/></svg>
<svg class="b" style="left:1746.4px;top:1053.8px;" width="17" height="14" viewBox="0 0 17 14"><path d="M0.6 4.6H3.4L7 1.2V12.8L3.4 9.4H0.6Z" fill="none" stroke="#fff" stroke-width="1.1"/><path d="M9.2 4.6Q10.8 7 9.2 9.4M11.4 3Q14 7 11.4 11" fill="none" stroke="#fff" stroke-width="1.1"/><path d="M13.8 1.2Q17.2 7 13.8 12.8" fill="none" stroke="#8893a6" stroke-width="1"/></svg>
<svg class="b" style="left:1775.6px;top:1052.4px;" width="18" height="13" viewBox="0 0 18 13"><path d="M1.2 0.6Q1.2 2.2 2.6 2.6V11.6" fill="none" stroke="#fff" stroke-width="1.1"/><circle cx="1.4" cy="1" r="0.9" fill="none" stroke="#fff" stroke-width="0.7"/><path d="M5 6.2V11.6M5 7.4L7.2 5.6L9 7.2L9 11.6" fill="none" stroke="#fff" stroke-width="1.1"/><circle cx="5" cy="6" r="0.9" fill="none" stroke="#fff" stroke-width="0.7"/><path d="M12 5.6Q11.4 7.6 12.6 8.4Q11.4 9 11.6 11.4H16.6V5.6" fill="none" stroke="#fff" stroke-width="1.1"/><circle cx="12.2" cy="5.8" r="0.9" fill="none" stroke="#fff" stroke-width="0.7"/></svg>
<span class="t" style="left:1812.9px;top:1043.2px;font-size:12px;line-height:16px;color:#fff;transform:scaleX(0.953);transform-origin:50% 50%;">5:21 PM</span>
<span class="t" style="left:1809.1px;top:1061.0px;font-size:12px;line-height:16px;color:#fff;">11/7/2023</span>
<svg class="b" style="left:1878.8px;top:1052.4px;" width="17" height="15" viewBox="0 0 17 15"><path d="M0 0H16.6V11H5.4L2.4 14V11H0Z" fill="#fff"/><path d="M2.8 3H13.8M2.8 5.4H13.8M2.8 7.8H13.8" stroke="#1d2a43" stroke-width="0.9"/></svg>
<svg class="b" style="left:1886.8px;top:1060.2px;" width="16" height="16" viewBox="0 0 16 16"><circle cx="8" cy="8" r="7.4" fill="#3a3f4d" stroke="#6d7280" stroke-width="0.9"/></svg>
<span class="t" style="left:1891.8px;top:1060.7px;font-size:11.5px;line-height:15px;color:#fff;font-weight:bold;">4</span>
<div class="b" style="left:1915.2px;top:1040.2px;width:1px;height:41px;background:#6d7686;"></div>
</div></body></html>
